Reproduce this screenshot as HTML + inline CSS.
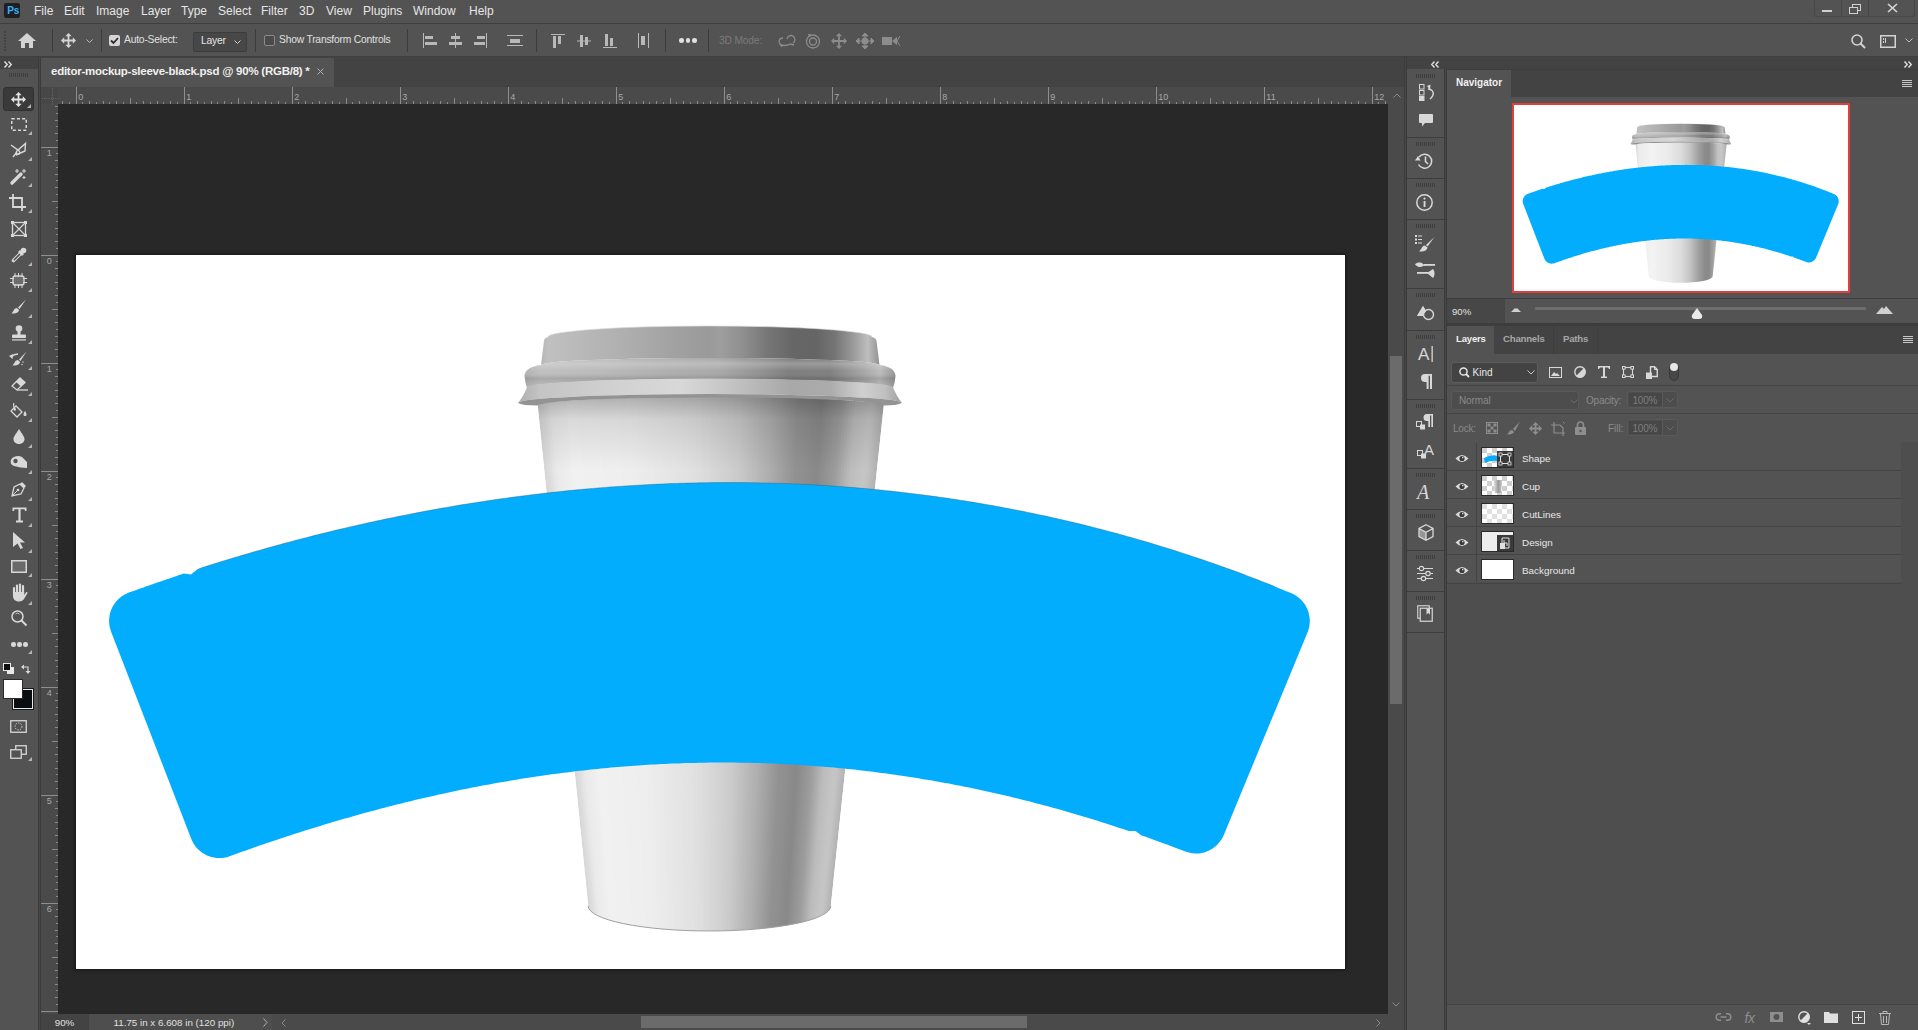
<!DOCTYPE html><html><head><meta charset="utf-8"><style>
*{margin:0;padding:0;box-sizing:border-box}
html,body{width:1918px;height:1030px;overflow:hidden;background:#535353;font-family:"Liberation Sans",sans-serif;color:#e8e8e8}
.a{position:absolute}
.t{position:absolute;white-space:nowrap;line-height:1}
svg{position:absolute;overflow:visible}
</style></head><body>
<div class="a" style="left:0px;top:0px;width:1918px;height:23px;background:#535353;"></div>
<div class="a" style="left:0px;top:23px;width:1918px;height:1px;background:#3f3f3f;"></div>
<div class="a" style="left:4px;top:3px;width:16px;height:15px;background:#1f1f1f;border-radius:2px"></div>
<div class="t" style="left:7.3px;top:5.6px;font-size:10px;color:#31b4ff;font-weight:bold;letter-spacing:-0.3px">Ps</div>
<div class="t" style="left:34px;top:5px;font-size:12px;color:#e6e6e6;font-weight:normal;">File</div>
<div class="t" style="left:64px;top:5px;font-size:12px;color:#e6e6e6;font-weight:normal;">Edit</div>
<div class="t" style="left:96px;top:5px;font-size:12px;color:#e6e6e6;font-weight:normal;">Image</div>
<div class="t" style="left:141px;top:5px;font-size:12px;color:#e6e6e6;font-weight:normal;">Layer</div>
<div class="t" style="left:181px;top:5px;font-size:12px;color:#e6e6e6;font-weight:normal;">Type</div>
<div class="t" style="left:218px;top:5px;font-size:12px;color:#e6e6e6;font-weight:normal;">Select</div>
<div class="t" style="left:261px;top:5px;font-size:12px;color:#e6e6e6;font-weight:normal;">Filter</div>
<div class="t" style="left:299px;top:5px;font-size:12px;color:#e6e6e6;font-weight:normal;">3D</div>
<div class="t" style="left:326px;top:5px;font-size:12px;color:#e6e6e6;font-weight:normal;">View</div>
<div class="t" style="left:363px;top:5px;font-size:12px;color:#e6e6e6;font-weight:normal;">Plugins</div>
<div class="t" style="left:413px;top:5px;font-size:12px;color:#e6e6e6;font-weight:normal;">Window</div>
<div class="t" style="left:469px;top:5px;font-size:12px;color:#e6e6e6;font-weight:normal;">Help</div>
<div class="a" style="left:1814px;top:-1px;width:101px;height:18px;border:1px solid #474747;border-top:none;border-radius:0 0 3px 3px"></div>
<div class="a" style="left:1841px;top:0px;width:1px;height:17px;background:#474747;"></div>
<div class="a" style="left:1868px;top:0px;width:1px;height:17px;background:#474747;"></div>
<div class="a" style="left:1822px;top:10px;width:10px;height:2px;background:#d0d0d0;"></div>
<svg style="left:1849px;top:4px" width="13" height="11" viewBox="0 0 13 11" ><rect x="3.5" y="0.5" width="8" height="6" fill="none" stroke="#d0d0d0"/><rect x="0.5" y="3.5" width="8" height="6" fill="#535353" stroke="#d0d0d0"/></svg>
<svg style="left:1887px;top:3px" width="11" height="10" viewBox="0 0 11 10" ><path d="M1,1 L10,9 M10,1 L1,9" stroke="#d8d8d8" stroke-width="1.6"/></svg>
<div class="a" style="left:0px;top:24px;width:1918px;height:33px;background:#535353;"></div>
<div class="a" style="left:0px;top:56px;width:1918px;height:1px;background:#3f3f3f;"></div>
<div class="a" style="left:4px;top:31px;width:2px;height:2px;background:#444;"></div>
<div class="a" style="left:4px;top:34px;width:2px;height:2px;background:#444;"></div>
<div class="a" style="left:4px;top:37px;width:2px;height:2px;background:#444;"></div>
<div class="a" style="left:4px;top:40px;width:2px;height:2px;background:#444;"></div>
<div class="a" style="left:4px;top:43px;width:2px;height:2px;background:#444;"></div>
<div class="a" style="left:4px;top:46px;width:2px;height:2px;background:#444;"></div>
<div class="a" style="left:4px;top:49px;width:2px;height:2px;background:#444;"></div>
<svg style="left:18px;top:33px" width="18" height="15" viewBox="0 0 18 15" ><path d="M9,0 L18,8 L15,8 L15,15 L11,15 L11,10 L7,10 L7,15 L3,15 L3,8 L0,8 Z" fill="#d4d4d4"/></svg>
<div class="a" style="left:52px;top:29px;width:1px;height:23px;background:#3c3c3c;"></div>
<div class="a" style="left:101px;top:29px;width:1px;height:23px;background:#3c3c3c;"></div>
<div class="a" style="left:255px;top:29px;width:1px;height:23px;background:#3c3c3c;"></div>
<div class="a" style="left:407px;top:29px;width:1px;height:23px;background:#3c3c3c;"></div>
<div class="a" style="left:536px;top:29px;width:1px;height:23px;background:#3c3c3c;"></div>
<div class="a" style="left:665px;top:29px;width:1px;height:23px;background:#3c3c3c;"></div>
<div class="a" style="left:708px;top:29px;width:1px;height:23px;background:#3c3c3c;"></div>
<svg style="left:61.0px;top:33.0px" width="15" height="15" viewBox="0 0 15 15" ><path d="M7.5,2 L7.5,13 M2,7.5 L13,7.5" stroke="#d4d4d4" stroke-width="1.8"/><path d="M7.5,0 L10.7,3.2 L4.3,3.2 Z M7.5,15 L10.7,11.8 L4.3,11.8 Z M0,7.5 L3.2,4.3 L3.2,10.7 Z M15,7.5 L11.8,4.3 L11.8,10.7 Z" fill="#d4d4d4"/></svg>
<svg style="left:86px;top:39px" width="7" height="4" viewBox="0 0 7 4" ><path d="M0.5,0.5 L3.5,3.5 L6.5,0.5" fill="none" stroke="#bdbdbd"/></svg>
<div class="a" style="left:109px;top:35px;width:11px;height:11px;background:#d6d6d6;border-radius:2px"></div>
<svg style="left:110px;top:37px" width="9" height="7" viewBox="0 0 9 7" ><path d="M1,3.5 L3.5,6 L8,1" fill="none" stroke="#2b2b2b" stroke-width="1.8"/></svg>
<div class="t" style="left:124px;top:35.4px;font-size:10.3px;color:#e0e0e0;font-weight:normal;letter-spacing:-0.2px">Auto-Select:</div>
<div class="a" style="left:193px;top:32px;width:54px;height:20px;background:#474747;border:1px solid #3c3c3c;border-radius:2px"></div>
<div class="t" style="left:201px;top:36.2px;font-size:10.3px;color:#e6e6e6;font-weight:normal;letter-spacing:-0.2px">Layer</div>
<svg style="left:234px;top:40px" width="7" height="4" viewBox="0 0 7 4" ><path d="M0.5,0.5 L3.5,3.5 L6.5,0.5" fill="none" stroke="#cfcfcf"/></svg>
<div class="a" style="left:264px;top:35px;width:11px;height:11px;border:1px solid #8a8a8a;border-radius:2px;background:#4a4a4a"></div>
<div class="t" style="left:279px;top:35.4px;font-size:10.3px;color:#e0e0e0;font-weight:normal;letter-spacing:-0.2px">Show Transform Controls</div>
<svg style="left:423px;top:33px" width="14" height="15" viewBox="0 0 14 15" ><rect x="0" y="0" width="1" height="15" fill="#b8b8b8"/><rect x="2" y="3" width="8" height="3" fill="#b8b8b8"/><rect x="2" y="9" width="12" height="3" fill="#b8b8b8"/></svg>
<svg style="left:449px;top:33px" width="13" height="15" viewBox="0 0 13 15" ><rect x="6" y="0" width="1" height="15" fill="#b8b8b8"/><rect x="2" y="3" width="9" height="3" fill="#b8b8b8"/><rect x="0" y="9" width="13" height="3" fill="#b8b8b8"/></svg>
<svg style="left:474px;top:33px" width="13" height="15" viewBox="0 0 13 15" ><rect x="12" y="0" width="1" height="15" fill="#b8b8b8"/><rect x="3" y="3" width="8" height="3" fill="#b8b8b8"/><rect x="0" y="9" width="11" height="3" fill="#b8b8b8"/></svg>
<svg style="left:507px;top:35px" width="16" height="11" viewBox="0 0 16 11" ><rect x="0" y="0" width="16" height="1" fill="#b8b8b8"/><rect x="3" y="4" width="10" height="4" fill="#b8b8b8"/><rect x="0" y="10" width="16" height="1" fill="#b8b8b8"/></svg>
<svg style="left:551px;top:34px" width="14" height="14" viewBox="0 0 14 14" ><rect x="0" y="0" width="14" height="1" fill="#b8b8b8"/><rect x="2" y="2" width="3" height="12" fill="#b8b8b8"/><rect x="7" y="2" width="3" height="8" fill="#b8b8b8"/></svg>
<svg style="left:577px;top:34px" width="14" height="14" viewBox="0 0 14 14" ><rect x="0" y="6.5" width="14" height="1" fill="#b8b8b8"/><rect x="3" y="1" width="3" height="12" fill="#b8b8b8"/><rect x="8" y="3" width="3" height="8" fill="#b8b8b8"/></svg>
<svg style="left:603px;top:34px" width="14" height="14" viewBox="0 0 14 14" ><rect x="0" y="13" width="14" height="1" fill="#b8b8b8"/><rect x="2" y="0" width="3" height="12" fill="#b8b8b8"/><rect x="7" y="4" width="3" height="8" fill="#b8b8b8"/></svg>
<svg style="left:638px;top:33px" width="11" height="15" viewBox="0 0 11 15" ><rect x="0" y="0" width="1" height="15" fill="#b8b8b8"/><rect x="3" y="3" width="4" height="9" fill="#b8b8b8"/><rect x="10" y="0" width="1" height="15" fill="#b8b8b8"/></svg>
<div class="a" style="left:679.0px;top:38px;width:4.5px;height:4.5px;border-radius:50%;background:#e0e0e0"></div>
<div class="a" style="left:685.5px;top:38px;width:4.5px;height:4.5px;border-radius:50%;background:#e0e0e0"></div>
<div class="a" style="left:692.0px;top:38px;width:4.5px;height:4.5px;border-radius:50%;background:#e0e0e0"></div>
<div class="t" style="left:719px;top:35.6px;font-size:10.3px;color:#7a7a7a;font-weight:normal;letter-spacing:-0.2px">3D Mode:</div>
<svg style="left:778px;top:33px" width="19" height="15" viewBox="0 0 19 15" ><path d="M5,5 C1,5 0,9 2,11 C4,13 9,13 12,11 M9,6 a4,4 0 1 1 6,4 M2,11 L4,14 M12,11 L16,12" fill="none" stroke="#8c8c8c" stroke-width="1.3"/></svg>
<svg style="left:805px;top:33px" width="16" height="16" viewBox="0 0 16 16" ><circle cx="8" cy="8.5" r="6.5" fill="none" stroke="#8c8c8c" stroke-width="1.3"/><circle cx="8" cy="8.5" r="3.5" fill="none" stroke="#8c8c8c" stroke-width="1.3"/><path d="M3,1 L6,1 L4,4 Z" fill="#8c8c8c"/></svg>
<svg style="left:830.5px;top:32.5px" width="16" height="16" viewBox="0 0 16 16" ><path d="M8.0,2 L8.0,14 M2,8.0 L14,8.0" stroke="#8c8c8c" stroke-width="1.8"/><path d="M8.0,0 L11.2,3.2 L4.8,3.2 Z M8.0,16 L11.2,12.8 L4.8,12.8 Z M0,8.0 L3.2,4.8 L3.2,11.2 Z M16,8.0 L12.8,4.8 L12.8,11.2 Z" fill="#8c8c8c"/></svg>
<svg style="left:856px;top:33px" width="18" height="16" viewBox="0 0 18 16" ><circle cx="9" cy="8" r="3.5" fill="#8c8c8c"/><path d="M9,0 L12,3 L6,3 Z M9,16 L12,13 L6,13 Z M0,8 L3,5 L3,11 Z M18,8 L15,5 L15,11 Z M9,3 L9,13 M3,8 L15,8" fill="#8c8c8c" stroke="#8c8c8c"/></svg>
<svg style="left:882px;top:35px" width="18" height="11" viewBox="0 0 18 11" ><rect x="0" y="2" width="10" height="8" fill="#8c8c8c"/><path d="M10,6 L15,2 L15,10 Z" fill="#8c8c8c"/><path d="M18,1 L15,6 L18,11" fill="none" stroke="#8c8c8c"/></svg>
<svg style="left:1851px;top:34px" width="15" height="15" viewBox="0 0 15 15" ><circle cx="6" cy="6" r="5" fill="none" stroke="#d4d4d4" stroke-width="1.6"/><path d="M9.5,9.5 L14,14" stroke="#d4d4d4" stroke-width="2"/></svg>
<svg style="left:1880px;top:35px" width="16" height="13" viewBox="0 0 16 13" ><rect x="0.75" y="0.75" width="14.5" height="11.5" fill="none" stroke="#d4d4d4" stroke-width="1.5"/><rect x="3" y="3" width="1" height="2" fill="#d4d4d4"/><rect x="3" y="6" width="1" height="2" fill="#d4d4d4"/><rect x="5" y="3" width="1" height="5" fill="#d4d4d4"/></svg>
<svg style="left:1905px;top:38px" width="8" height="5" viewBox="0 0 8 5" ><path d="M0.5,0.5 L4,4 L7.5,0.5" fill="none" stroke="#bdbdbd"/></svg>
<div class="a" style="left:0px;top:57px;width:1918px;height:30px;background:#434343;"></div>
<div class="a" style="left:41px;top:58px;width:293px;height:29px;background:#535353;"></div>
<div class="t" style="left:51px;top:65.9px;font-size:11.5px;color:#f0f0f0;font-weight:bold;letter-spacing:-0.25px">editor-mockup-sleeve-black.psd @ 90% (RGB/8) *</div>
<svg style="left:317px;top:68px" width="7" height="7" viewBox="0 0 7 7" ><path d="M0.5,0.5 L6.5,6.5 M6.5,0.5 L0.5,6.5" stroke="#b0b0b0"/></svg>
<div class="a" style="left:0px;top:57px;width:38px;height:12px;background:#434343;"></div>
<svg style="left:4px;top:61px" width="8" height="7" viewBox="0 0 8 7" ><path d="M0.5,0.5 L3.25,3.5 L0.5,6.5 M4.5,0.5 L7.25,3.5 L4.5,6.5" fill="none" stroke="#e0e0e0" stroke-width="1.4"/></svg>
<div class="a" style="left:0px;top:69px;width:38px;height:961px;background:#535353;"></div>
<div class="a" style="left:38px;top:57px;width:3px;height:973px;background:#3b3b3b;"></div>
<div class="a" style="left:39px;top:57px;width:1px;height:973px;background:#474747;"></div>
<div class="a" style="left:9px;top:73px;width:1px;height:4px;background:#3e3e3e;"></div>
<div class="a" style="left:11px;top:73px;width:1px;height:4px;background:#3e3e3e;"></div>
<div class="a" style="left:13px;top:73px;width:1px;height:4px;background:#3e3e3e;"></div>
<div class="a" style="left:15px;top:73px;width:1px;height:4px;background:#3e3e3e;"></div>
<div class="a" style="left:17px;top:73px;width:1px;height:4px;background:#3e3e3e;"></div>
<div class="a" style="left:19px;top:73px;width:1px;height:4px;background:#3e3e3e;"></div>
<div class="a" style="left:21px;top:73px;width:1px;height:4px;background:#3e3e3e;"></div>
<div class="a" style="left:23px;top:73px;width:1px;height:4px;background:#3e3e3e;"></div>
<div class="a" style="left:25px;top:73px;width:1px;height:4px;background:#3e3e3e;"></div>
<div class="a" style="left:27px;top:73px;width:1px;height:4px;background:#3e3e3e;"></div>
<div class="a" style="left:3px;top:87px;width:31px;height:24px;background:#3a3a3a;border:1px solid #303030;border-radius:3px"></div>
<svg style="left:11.0px;top:92.0px" width="15" height="15" viewBox="0 0 15 15" ><path d="M7.5,2 L7.5,13 M2,7.5 L13,7.5" stroke="#e2e2e2" stroke-width="1.8"/><path d="M7.5,0 L10.7,3.2 L4.3,3.2 Z M7.5,15 L10.7,11.8 L4.3,11.8 Z M0,7.5 L3.2,4.3 L3.2,10.7 Z M15,7.5 L11.8,4.3 L11.8,10.7 Z" fill="#e2e2e2"/></svg>
<svg style="left:27px;top:104px" width="4" height="4" viewBox="0 0 4 4" ><path d="M4,0 L4,4 L0,4 Z" fill="#b4b4b4"/></svg>
<svg style="left:11px;top:118px" width="16" height="13" viewBox="0 0 16 13" ><rect x="0.75" y="0.75" width="14.5" height="11.5" fill="none" stroke="#d8d8d8" stroke-width="1.5" stroke-dasharray="3,2.2"/></svg>
<svg style="left:28px;top:131px" width="4" height="4" viewBox="0 0 4 4" ><path d="M4,0 L4,4 L0,4 Z" fill="#b4b4b4"/></svg>
<svg style="left:10px;top:142px" width="17" height="16" viewBox="0 0 17 16" ><path d="M1,3 L8,8 L15.5,1.5 L15,9 L6,13 M7,10 L3,15" fill="none" stroke="#d8d8d8" stroke-width="1.4"/><circle cx="8" cy="10.5" r="1.8" fill="none" stroke="#d8d8d8" stroke-width="1.3"/></svg>
<svg style="left:28px;top:157px" width="4" height="4" viewBox="0 0 4 4" ><path d="M4,0 L4,4 L0,4 Z" fill="#b4b4b4"/></svg>
<svg style="left:10px;top:168px" width="17" height="17" viewBox="0 0 17 17" ><path d="M2,15 L11,6" stroke="#d8d8d8" stroke-width="3.4" stroke-linecap="round"/><path d="M7,1 L7,5 M5,3 L9,3 M14,1 L14,5 M12,3 L16,3 M14,8 L14,11 M12.5,9.5 L15.5,9.5" stroke="#d8d8d8" stroke-width="1.1"/></svg>
<svg style="left:28px;top:183px" width="4" height="4" viewBox="0 0 4 4" ><path d="M4,0 L4,4 L0,4 Z" fill="#b4b4b4"/></svg>
<svg style="left:9px;top:194px" width="18" height="18" viewBox="0 0 18 18" ><path d="M4,0 L4,13 L17,13 M0,4 L13,4 L13,17" fill="none" stroke="#d8d8d8" stroke-width="1.8"/></svg>
<svg style="left:28px;top:209px" width="4" height="4" viewBox="0 0 4 4" ><path d="M4,0 L4,4 L0,4 Z" fill="#b4b4b4"/></svg>
<svg style="left:11px;top:221px" width="16" height="16" viewBox="0 0 16 16" ><rect x="1.5" y="1.5" width="13" height="13" fill="none" stroke="#d8d8d8" stroke-width="1.3"/><path d="M1.5,1.5 L14.5,14.5 M14.5,1.5 L1.5,14.5" stroke="#d8d8d8" stroke-width="1.1"/><rect x="0" y="0" width="3" height="3" fill="#d8d8d8"/><rect x="13" y="0" width="3" height="3" fill="#d8d8d8"/><rect x="0" y="13" width="3" height="3" fill="#d8d8d8"/><rect x="13" y="13" width="3" height="3" fill="#d8d8d8"/></svg>
<svg style="left:11px;top:247px" width="16" height="16" viewBox="0 0 16 16" ><path d="M2.5,13.5 L9.5,6.5" stroke="#d8d8d8" stroke-width="3.6" stroke-linecap="round"/><path d="M3.3,12.7 L9,7" stroke="#535353" stroke-width="1.6" stroke-linecap="round"/><path d="M8,4 L12,8" stroke="#d8d8d8" stroke-width="3"/><circle cx="12.5" cy="3.5" r="2.8" fill="#d8d8d8"/></svg>
<svg style="left:28px;top:262px" width="4" height="4" viewBox="0 0 4 4" ><path d="M4,0 L4,4 L0,4 Z" fill="#b4b4b4"/></svg>
<svg style="left:10px;top:273px" width="17" height="15" viewBox="0 0 17 15" ><rect x="3" y="3" width="11" height="9" rx="2" fill="#6c6c6c" stroke="#d8d8d8" stroke-width="1.3"/><path d="M5,0 L5,15 M8.5,0 L8.5,15 M12,0 L12,15 M0,5.5 L17,5.5 M0,9.5 L17,9.5" stroke="#d8d8d8" stroke-width="1"/><rect x="4" y="4" width="9" height="7" fill="#6c6c6c"/></svg>
<svg style="left:28px;top:288px" width="4" height="4" viewBox="0 0 4 4" ><path d="M4,0 L4,4 L0,4 Z" fill="#b4b4b4"/></svg>
<svg style="left:11px;top:299px" width="15" height="15" viewBox="0 0 15 15" ><path d="M15,0.5 L7,8.5 L8.5,10 Z" fill="#d8d8d8"/><path d="M6,9 C3,9 3,12 0.5,14.5 C5,15 8,13 8,11 Z" fill="#d8d8d8"/></svg>
<svg style="left:28px;top:314px" width="4" height="4" viewBox="0 0 4 4" ><path d="M4,0 L4,4 L0,4 Z" fill="#b4b4b4"/></svg>
<svg style="left:11px;top:325px" width="16" height="16" viewBox="0 0 16 16" ><circle cx="8" cy="3.5" r="3.3" fill="#d8d8d8"/><rect x="6.5" y="5" width="3" height="5" fill="#d8d8d8"/><rect x="1" y="9.5" width="14" height="3.5" rx="1" fill="#d8d8d8"/><rect x="1" y="14.3" width="14" height="1.2" fill="#d8d8d8"/></svg>
<svg style="left:28px;top:340px" width="4" height="4" viewBox="0 0 4 4" ><path d="M4,0 L4,4 L0,4 Z" fill="#b4b4b4"/></svg>
<svg style="left:9px;top:351px" width="19" height="16" viewBox="0 0 19 16" ><path d="M17.5,0.5 L10,8.5 L11.5,10 Z" fill="#d8d8d8"/><path d="M9,9 C6,9 6,12 3.5,14.5 C8,15 11,13 11,11 Z" fill="#d8d8d8"/><path d="M9,3 C6,3 4,4 2,6" fill="none" stroke="#d8d8d8" stroke-width="1.3"/><path d="M0,5 L4,3 L3.5,8 Z" fill="#d8d8d8"/><circle cx="14" cy="11" r="0.7" fill="#d8d8d8"/><circle cx="13" cy="13.5" r="0.7" fill="#d8d8d8"/></svg>
<svg style="left:28px;top:366px" width="4" height="4" viewBox="0 0 4 4" ><path d="M4,0 L4,4 L0,4 Z" fill="#b4b4b4"/></svg>
<svg style="left:11px;top:377px" width="18" height="15" viewBox="0 0 18 15" ><path d="M1,9 L9,1 L14,5.5 L6,13 Z" fill="#535353" stroke="#d8d8d8" stroke-width="1.3"/><path d="M9,1 L14,5.5 L10,9.5 L5,5 Z" fill="#d8d8d8"/><path d="M6,13 L17,13" stroke="#d8d8d8" stroke-width="1.3"/></svg>
<svg style="left:28px;top:392px" width="4" height="4" viewBox="0 0 4 4" ><path d="M4,0 L4,4 L0,4 Z" fill="#b4b4b4"/></svg>
<svg style="left:10px;top:402px" width="18" height="16" viewBox="0 0 18 16" ><path d="M6,4 L12,10 L7,15 L1,9 Z" fill="none" stroke="#d8d8d8" stroke-width="1.3"/><path d="M4,1 C3,3 4,6 5,7" fill="none" stroke="#d8d8d8" stroke-width="1.2"/><circle cx="4.8" cy="7.5" r="1.2" fill="#d8d8d8"/><path d="M15,9 C17,12 17,14 15,14 C13,14 13,12 15,9 Z" fill="#d8d8d8"/></svg>
<svg style="left:28px;top:418px" width="4" height="4" viewBox="0 0 4 4" ><path d="M4,0 L4,4 L0,4 Z" fill="#b4b4b4"/></svg>
<svg style="left:13px;top:429px" width="12" height="15" viewBox="0 0 12 15" ><path d="M6,0 C9,5 12,8 11.5,10.5 C11,14 8,15 6,15 C4,15 1,14 0.5,10.5 C0,8 3,5 6,0 Z" fill="#d8d8d8"/></svg>
<svg style="left:28px;top:444px" width="4" height="4" viewBox="0 0 4 4" ><path d="M4,0 L4,4 L0,4 Z" fill="#b4b4b4"/></svg>
<svg style="left:10px;top:455px" width="18" height="14" viewBox="0 0 18 14" ><path d="M4,2 C8,0 12,1 14,4 L17,7 L17,13 C13,13 8,12 4,11 C1,10 0,8 1,5 C1.5,3.5 2.5,2.5 4,2 Z" fill="#d8d8d8"/><circle cx="5.5" cy="6" r="2.2" fill="#535353"/></svg>
<svg style="left:28px;top:470px" width="4" height="4" viewBox="0 0 4 4" ><path d="M4,0 L4,4 L0,4 Z" fill="#b4b4b4"/></svg>
<svg style="left:11px;top:481px" width="16" height="16" viewBox="0 0 16 16" ><path d="M11,1 L15,5 L13,7 L9,3 Z" fill="#d8d8d8"/><path d="M9,3 L13,7 L10,13 L1,15 L3,6 Z" fill="none" stroke="#d8d8d8" stroke-width="1.3"/><path d="M1,15 L6.5,9.5" stroke="#d8d8d8"/><circle cx="7" cy="9" r="1.3" fill="#d8d8d8"/></svg>
<svg style="left:28px;top:497px" width="4" height="4" viewBox="0 0 4 4" ><path d="M4,0 L4,4 L0,4 Z" fill="#b4b4b4"/></svg>
<svg style="left:12px;top:507px" width="15" height="16" viewBox="0 0 15 16" ><path d="M0.5,0.5 L14.5,0.5 L14.5,4 L13,4 L12.5,2.3 L8.6,2.3 L8.6,13.5 L11,13.5 L11,15.5 L4,15.5 L4,13.5 L6.4,13.5 L6.4,2.3 L2.5,2.3 L2,4 L0.5,4 Z" fill="#d8d8d8"/></svg>
<svg style="left:28px;top:523px" width="4" height="4" viewBox="0 0 4 4" ><path d="M4,0 L4,4 L0,4 Z" fill="#b4b4b4"/></svg>
<svg style="left:13px;top:532px" width="13" height="17" viewBox="0 0 13 17" ><path d="M0,0 L12,10.5 L7,10.5 L10,16 L7.5,17 L4.5,11.5 L0,15 Z" fill="#d8d8d8"/></svg>
<svg style="left:28px;top:549px" width="4" height="4" viewBox="0 0 4 4" ><path d="M4,0 L4,4 L0,4 Z" fill="#b4b4b4"/></svg>
<svg style="left:11px;top:560px" width="16" height="13" viewBox="0 0 16 13" ><rect x="0.75" y="0.75" width="14.5" height="11.5" fill="#6a6a6a" stroke="#d8d8d8" stroke-width="1.5"/></svg>
<svg style="left:28px;top:573px" width="4" height="4" viewBox="0 0 4 4" ><path d="M4,0 L4,4 L0,4 Z" fill="#b4b4b4"/></svg>
<svg style="left:10px;top:583px" width="18" height="19" viewBox="0 0 18 19" ><path d="M4,12 L4,5" stroke="#d8d8d8" stroke-width="2.2" stroke-linecap="round"/><path d="M7,10 L7,2.5" stroke="#d8d8d8" stroke-width="2.2" stroke-linecap="round"/><path d="M10,10 L10,1.5" stroke="#d8d8d8" stroke-width="2.2" stroke-linecap="round"/><path d="M13,10 L13,3" stroke="#d8d8d8" stroke-width="2.2" stroke-linecap="round"/><path d="M3,9 L14.2,9 L14.2,12 L16,9.5 C17,8.5 18,9.5 17.3,10.5 L14,16 C13,17.5 11.5,18.5 9,18.5 C5,18.5 3,16 3,13 Z" fill="#d8d8d8"/></svg>
<svg style="left:28px;top:601px" width="4" height="4" viewBox="0 0 4 4" ><path d="M4,0 L4,4 L0,4 Z" fill="#b4b4b4"/></svg>
<svg style="left:11px;top:610px" width="16" height="17" viewBox="0 0 16 17" ><circle cx="6.5" cy="6.5" r="5.5" fill="none" stroke="#d8d8d8" stroke-width="1.5"/><path d="M10.5,10.5 L15.5,15.5" stroke="#d8d8d8" stroke-width="2"/><path d="M4.5,4 A3,3 0 0 1 8.5,4" fill="none" stroke="#d8d8d8" stroke-width="0.8"/></svg>
<div class="a" style="left:11px;top:642px;width:4.5px;height:4.5px;border-radius:50%;background:#d8d8d8"></div>
<div class="a" style="left:17px;top:642px;width:4.5px;height:4.5px;border-radius:50%;background:#d8d8d8"></div>
<div class="a" style="left:23px;top:642px;width:4.5px;height:4.5px;border-radius:50%;background:#d8d8d8"></div>
<svg style="left:28px;top:650px" width="4" height="4" viewBox="0 0 4 4" ><path d="M4,0 L4,4 L0,4 Z" fill="#b4b4b4"/></svg>
<div class="a" style="left:7px;top:667px;width:7px;height:7px;background:#e8e8e8;"></div>
<div class="a" style="left:4px;top:664px;width:6px;height:6px;background:#0d0d0d;outline:1px solid #e8e8e8"></div>
<svg style="left:21px;top:663px" width="11" height="11" viewBox="0 0 11 11" ><path d="M1,4 L7,4 L7,10" fill="none" stroke="#d8d8d8" stroke-width="1.2"/><path d="M0,4 L3,1.5 L3,6.5 Z M7,11 L4.5,8 L9.5,8 Z" fill="#d8d8d8"/></svg>
<div class="a" style="left:13px;top:689px;width:20px;height:20px;background:#0a0e10;border:1px solid #e8e8e8;outline:1px solid #1a1a1a"></div>
<div class="a" style="left:3px;top:679px;width:20px;height:20px;background:#ffffff;border:1px solid #2a2a2a"></div>
<svg style="left:10px;top:720px" width="17" height="13" viewBox="0 0 17 13" ><rect x="0.75" y="0.75" width="15.5" height="11.5" fill="none" stroke="#d8d8d8" stroke-width="1.3"/><circle cx="8.5" cy="6.5" r="3.5" fill="none" stroke="#d8d8d8" stroke-width="1" stroke-dasharray="1.3,1.3"/></svg>
<svg style="left:10px;top:745px" width="17" height="14" viewBox="0 0 17 14" ><rect x="5.75" y="0.75" width="10.5" height="8.5" fill="#535353" stroke="#d8d8d8" stroke-width="1.3"/><rect x="0.75" y="4.75" width="10.5" height="8.5" fill="#535353" stroke="#d8d8d8" stroke-width="1.3"/></svg>
<svg style="left:28px;top:757px" width="4" height="4" viewBox="0 0 4 4" ><path d="M4,0 L4,4 L0,4 Z" fill="#b4b4b4"/></svg>
<div class="a" style="left:41px;top:87px;width:1347px;height:17px;background:#4a4a4a;"></div>
<div class="a" style="left:41px;top:104px;width:17px;height:910px;background:#4a4a4a;"></div>
<div class="a" style="left:41px;top:87px;width:17px;height:17px;background:#474747;"></div>
<svg style="left:58px;top:87px" width="1330" height="17" viewBox="0 0 1330 17" ><rect x="4" y="14" width="1" height="3" fill="#8a8a8a"/><rect x="11" y="15" width="1" height="2" fill="#8a8a8a"/><rect x="18" y="0" width="1" height="17" fill="#8e8e8e"/><rect x="24" y="15" width="1" height="2" fill="#8a8a8a"/><rect x="31" y="14" width="1" height="3" fill="#8a8a8a"/><rect x="38" y="15" width="1" height="2" fill="#8a8a8a"/><rect x="45" y="14" width="1" height="3" fill="#8a8a8a"/><rect x="51" y="15" width="1" height="2" fill="#8a8a8a"/><rect x="58" y="14" width="1" height="3" fill="#8a8a8a"/><rect x="65" y="15" width="1" height="2" fill="#8a8a8a"/><rect x="72" y="11" width="1" height="6" fill="#8a8a8a"/><rect x="78" y="15" width="1" height="2" fill="#8a8a8a"/><rect x="85" y="14" width="1" height="3" fill="#8a8a8a"/><rect x="92" y="15" width="1" height="2" fill="#8a8a8a"/><rect x="99" y="14" width="1" height="3" fill="#8a8a8a"/><rect x="105" y="15" width="1" height="2" fill="#8a8a8a"/><rect x="112" y="14" width="1" height="3" fill="#8a8a8a"/><rect x="119" y="15" width="1" height="2" fill="#8a8a8a"/><text x="20.3" y="12.8" font-size="9" fill="#a8a8a8" font-family="Liberation Sans">0</text><rect x="126" y="0" width="1" height="17" fill="#8e8e8e"/><rect x="132" y="15" width="1" height="2" fill="#8a8a8a"/><rect x="139" y="14" width="1" height="3" fill="#8a8a8a"/><rect x="146" y="15" width="1" height="2" fill="#8a8a8a"/><rect x="153" y="14" width="1" height="3" fill="#8a8a8a"/><rect x="159" y="15" width="1" height="2" fill="#8a8a8a"/><rect x="166" y="14" width="1" height="3" fill="#8a8a8a"/><rect x="173" y="15" width="1" height="2" fill="#8a8a8a"/><rect x="180" y="11" width="1" height="6" fill="#8a8a8a"/><rect x="186" y="15" width="1" height="2" fill="#8a8a8a"/><rect x="193" y="14" width="1" height="3" fill="#8a8a8a"/><rect x="200" y="15" width="1" height="2" fill="#8a8a8a"/><rect x="207" y="14" width="1" height="3" fill="#8a8a8a"/><rect x="213" y="15" width="1" height="2" fill="#8a8a8a"/><rect x="220" y="14" width="1" height="3" fill="#8a8a8a"/><rect x="227" y="15" width="1" height="2" fill="#8a8a8a"/><text x="128.3" y="12.8" font-size="9" fill="#a8a8a8" font-family="Liberation Sans">1</text><rect x="234" y="0" width="1" height="17" fill="#8e8e8e"/><rect x="240" y="15" width="1" height="2" fill="#8a8a8a"/><rect x="247" y="14" width="1" height="3" fill="#8a8a8a"/><rect x="254" y="15" width="1" height="2" fill="#8a8a8a"/><rect x="261" y="14" width="1" height="3" fill="#8a8a8a"/><rect x="267" y="15" width="1" height="2" fill="#8a8a8a"/><rect x="274" y="14" width="1" height="3" fill="#8a8a8a"/><rect x="281" y="15" width="1" height="2" fill="#8a8a8a"/><rect x="288" y="11" width="1" height="6" fill="#8a8a8a"/><rect x="294" y="15" width="1" height="2" fill="#8a8a8a"/><rect x="301" y="14" width="1" height="3" fill="#8a8a8a"/><rect x="308" y="15" width="1" height="2" fill="#8a8a8a"/><rect x="315" y="14" width="1" height="3" fill="#8a8a8a"/><rect x="321" y="15" width="1" height="2" fill="#8a8a8a"/><rect x="328" y="14" width="1" height="3" fill="#8a8a8a"/><rect x="335" y="15" width="1" height="2" fill="#8a8a8a"/><text x="236.3" y="12.8" font-size="9" fill="#a8a8a8" font-family="Liberation Sans">2</text><rect x="342" y="0" width="1" height="17" fill="#8e8e8e"/><rect x="348" y="15" width="1" height="2" fill="#8a8a8a"/><rect x="355" y="14" width="1" height="3" fill="#8a8a8a"/><rect x="362" y="15" width="1" height="2" fill="#8a8a8a"/><rect x="369" y="14" width="1" height="3" fill="#8a8a8a"/><rect x="375" y="15" width="1" height="2" fill="#8a8a8a"/><rect x="382" y="14" width="1" height="3" fill="#8a8a8a"/><rect x="389" y="15" width="1" height="2" fill="#8a8a8a"/><rect x="396" y="11" width="1" height="6" fill="#8a8a8a"/><rect x="402" y="15" width="1" height="2" fill="#8a8a8a"/><rect x="409" y="14" width="1" height="3" fill="#8a8a8a"/><rect x="416" y="15" width="1" height="2" fill="#8a8a8a"/><rect x="423" y="14" width="1" height="3" fill="#8a8a8a"/><rect x="429" y="15" width="1" height="2" fill="#8a8a8a"/><rect x="436" y="14" width="1" height="3" fill="#8a8a8a"/><rect x="443" y="15" width="1" height="2" fill="#8a8a8a"/><text x="344.3" y="12.8" font-size="9" fill="#a8a8a8" font-family="Liberation Sans">3</text><rect x="450" y="0" width="1" height="17" fill="#8e8e8e"/><rect x="456" y="15" width="1" height="2" fill="#8a8a8a"/><rect x="463" y="14" width="1" height="3" fill="#8a8a8a"/><rect x="470" y="15" width="1" height="2" fill="#8a8a8a"/><rect x="477" y="14" width="1" height="3" fill="#8a8a8a"/><rect x="483" y="15" width="1" height="2" fill="#8a8a8a"/><rect x="490" y="14" width="1" height="3" fill="#8a8a8a"/><rect x="497" y="15" width="1" height="2" fill="#8a8a8a"/><rect x="504" y="11" width="1" height="6" fill="#8a8a8a"/><rect x="510" y="15" width="1" height="2" fill="#8a8a8a"/><rect x="517" y="14" width="1" height="3" fill="#8a8a8a"/><rect x="524" y="15" width="1" height="2" fill="#8a8a8a"/><rect x="531" y="14" width="1" height="3" fill="#8a8a8a"/><rect x="537" y="15" width="1" height="2" fill="#8a8a8a"/><rect x="544" y="14" width="1" height="3" fill="#8a8a8a"/><rect x="551" y="15" width="1" height="2" fill="#8a8a8a"/><text x="452.3" y="12.8" font-size="9" fill="#a8a8a8" font-family="Liberation Sans">4</text><rect x="558" y="0" width="1" height="17" fill="#8e8e8e"/><rect x="564" y="15" width="1" height="2" fill="#8a8a8a"/><rect x="571" y="14" width="1" height="3" fill="#8a8a8a"/><rect x="578" y="15" width="1" height="2" fill="#8a8a8a"/><rect x="585" y="14" width="1" height="3" fill="#8a8a8a"/><rect x="591" y="15" width="1" height="2" fill="#8a8a8a"/><rect x="598" y="14" width="1" height="3" fill="#8a8a8a"/><rect x="605" y="15" width="1" height="2" fill="#8a8a8a"/><rect x="612" y="11" width="1" height="6" fill="#8a8a8a"/><rect x="618" y="15" width="1" height="2" fill="#8a8a8a"/><rect x="625" y="14" width="1" height="3" fill="#8a8a8a"/><rect x="632" y="15" width="1" height="2" fill="#8a8a8a"/><rect x="639" y="14" width="1" height="3" fill="#8a8a8a"/><rect x="645" y="15" width="1" height="2" fill="#8a8a8a"/><rect x="652" y="14" width="1" height="3" fill="#8a8a8a"/><rect x="659" y="15" width="1" height="2" fill="#8a8a8a"/><text x="560.3" y="12.8" font-size="9" fill="#a8a8a8" font-family="Liberation Sans">5</text><rect x="666" y="0" width="1" height="17" fill="#8e8e8e"/><rect x="672" y="15" width="1" height="2" fill="#8a8a8a"/><rect x="679" y="14" width="1" height="3" fill="#8a8a8a"/><rect x="686" y="15" width="1" height="2" fill="#8a8a8a"/><rect x="693" y="14" width="1" height="3" fill="#8a8a8a"/><rect x="699" y="15" width="1" height="2" fill="#8a8a8a"/><rect x="706" y="14" width="1" height="3" fill="#8a8a8a"/><rect x="713" y="15" width="1" height="2" fill="#8a8a8a"/><rect x="720" y="11" width="1" height="6" fill="#8a8a8a"/><rect x="726" y="15" width="1" height="2" fill="#8a8a8a"/><rect x="733" y="14" width="1" height="3" fill="#8a8a8a"/><rect x="740" y="15" width="1" height="2" fill="#8a8a8a"/><rect x="747" y="14" width="1" height="3" fill="#8a8a8a"/><rect x="753" y="15" width="1" height="2" fill="#8a8a8a"/><rect x="760" y="14" width="1" height="3" fill="#8a8a8a"/><rect x="767" y="15" width="1" height="2" fill="#8a8a8a"/><text x="668.3" y="12.8" font-size="9" fill="#a8a8a8" font-family="Liberation Sans">6</text><rect x="774" y="0" width="1" height="17" fill="#8e8e8e"/><rect x="780" y="15" width="1" height="2" fill="#8a8a8a"/><rect x="787" y="14" width="1" height="3" fill="#8a8a8a"/><rect x="794" y="15" width="1" height="2" fill="#8a8a8a"/><rect x="801" y="14" width="1" height="3" fill="#8a8a8a"/><rect x="807" y="15" width="1" height="2" fill="#8a8a8a"/><rect x="814" y="14" width="1" height="3" fill="#8a8a8a"/><rect x="821" y="15" width="1" height="2" fill="#8a8a8a"/><rect x="828" y="11" width="1" height="6" fill="#8a8a8a"/><rect x="834" y="15" width="1" height="2" fill="#8a8a8a"/><rect x="841" y="14" width="1" height="3" fill="#8a8a8a"/><rect x="848" y="15" width="1" height="2" fill="#8a8a8a"/><rect x="855" y="14" width="1" height="3" fill="#8a8a8a"/><rect x="861" y="15" width="1" height="2" fill="#8a8a8a"/><rect x="868" y="14" width="1" height="3" fill="#8a8a8a"/><rect x="875" y="15" width="1" height="2" fill="#8a8a8a"/><text x="776.3" y="12.8" font-size="9" fill="#a8a8a8" font-family="Liberation Sans">7</text><rect x="882" y="0" width="1" height="17" fill="#8e8e8e"/><rect x="888" y="15" width="1" height="2" fill="#8a8a8a"/><rect x="895" y="14" width="1" height="3" fill="#8a8a8a"/><rect x="902" y="15" width="1" height="2" fill="#8a8a8a"/><rect x="909" y="14" width="1" height="3" fill="#8a8a8a"/><rect x="915" y="15" width="1" height="2" fill="#8a8a8a"/><rect x="922" y="14" width="1" height="3" fill="#8a8a8a"/><rect x="929" y="15" width="1" height="2" fill="#8a8a8a"/><rect x="936" y="11" width="1" height="6" fill="#8a8a8a"/><rect x="942" y="15" width="1" height="2" fill="#8a8a8a"/><rect x="949" y="14" width="1" height="3" fill="#8a8a8a"/><rect x="956" y="15" width="1" height="2" fill="#8a8a8a"/><rect x="963" y="14" width="1" height="3" fill="#8a8a8a"/><rect x="969" y="15" width="1" height="2" fill="#8a8a8a"/><rect x="976" y="14" width="1" height="3" fill="#8a8a8a"/><rect x="983" y="15" width="1" height="2" fill="#8a8a8a"/><text x="884.3" y="12.8" font-size="9" fill="#a8a8a8" font-family="Liberation Sans">8</text><rect x="990" y="0" width="1" height="17" fill="#8e8e8e"/><rect x="996" y="15" width="1" height="2" fill="#8a8a8a"/><rect x="1003" y="14" width="1" height="3" fill="#8a8a8a"/><rect x="1010" y="15" width="1" height="2" fill="#8a8a8a"/><rect x="1017" y="14" width="1" height="3" fill="#8a8a8a"/><rect x="1023" y="15" width="1" height="2" fill="#8a8a8a"/><rect x="1030" y="14" width="1" height="3" fill="#8a8a8a"/><rect x="1037" y="15" width="1" height="2" fill="#8a8a8a"/><rect x="1044" y="11" width="1" height="6" fill="#8a8a8a"/><rect x="1050" y="15" width="1" height="2" fill="#8a8a8a"/><rect x="1057" y="14" width="1" height="3" fill="#8a8a8a"/><rect x="1064" y="15" width="1" height="2" fill="#8a8a8a"/><rect x="1071" y="14" width="1" height="3" fill="#8a8a8a"/><rect x="1077" y="15" width="1" height="2" fill="#8a8a8a"/><rect x="1084" y="14" width="1" height="3" fill="#8a8a8a"/><rect x="1091" y="15" width="1" height="2" fill="#8a8a8a"/><text x="992.3" y="12.8" font-size="9" fill="#a8a8a8" font-family="Liberation Sans">9</text><rect x="1098" y="0" width="1" height="17" fill="#8e8e8e"/><rect x="1104" y="15" width="1" height="2" fill="#8a8a8a"/><rect x="1111" y="14" width="1" height="3" fill="#8a8a8a"/><rect x="1118" y="15" width="1" height="2" fill="#8a8a8a"/><rect x="1125" y="14" width="1" height="3" fill="#8a8a8a"/><rect x="1131" y="15" width="1" height="2" fill="#8a8a8a"/><rect x="1138" y="14" width="1" height="3" fill="#8a8a8a"/><rect x="1145" y="15" width="1" height="2" fill="#8a8a8a"/><rect x="1152" y="11" width="1" height="6" fill="#8a8a8a"/><rect x="1158" y="15" width="1" height="2" fill="#8a8a8a"/><rect x="1165" y="14" width="1" height="3" fill="#8a8a8a"/><rect x="1172" y="15" width="1" height="2" fill="#8a8a8a"/><rect x="1179" y="14" width="1" height="3" fill="#8a8a8a"/><rect x="1185" y="15" width="1" height="2" fill="#8a8a8a"/><rect x="1192" y="14" width="1" height="3" fill="#8a8a8a"/><rect x="1199" y="15" width="1" height="2" fill="#8a8a8a"/><text x="1100.3" y="12.8" font-size="9" fill="#a8a8a8" font-family="Liberation Sans">10</text><rect x="1206" y="0" width="1" height="17" fill="#8e8e8e"/><rect x="1212" y="15" width="1" height="2" fill="#8a8a8a"/><rect x="1219" y="14" width="1" height="3" fill="#8a8a8a"/><rect x="1226" y="15" width="1" height="2" fill="#8a8a8a"/><rect x="1233" y="14" width="1" height="3" fill="#8a8a8a"/><rect x="1239" y="15" width="1" height="2" fill="#8a8a8a"/><rect x="1246" y="14" width="1" height="3" fill="#8a8a8a"/><rect x="1253" y="15" width="1" height="2" fill="#8a8a8a"/><rect x="1260" y="11" width="1" height="6" fill="#8a8a8a"/><rect x="1266" y="15" width="1" height="2" fill="#8a8a8a"/><rect x="1273" y="14" width="1" height="3" fill="#8a8a8a"/><rect x="1280" y="15" width="1" height="2" fill="#8a8a8a"/><rect x="1287" y="14" width="1" height="3" fill="#8a8a8a"/><rect x="1293" y="15" width="1" height="2" fill="#8a8a8a"/><rect x="1300" y="14" width="1" height="3" fill="#8a8a8a"/><rect x="1307" y="15" width="1" height="2" fill="#8a8a8a"/><text x="1208.3" y="12.8" font-size="9" fill="#a8a8a8" font-family="Liberation Sans">11</text><rect x="1314" y="0" width="1" height="17" fill="#8e8e8e"/><rect x="1320" y="15" width="1" height="2" fill="#8a8a8a"/><rect x="1327" y="14" width="1" height="3" fill="#8a8a8a"/><text x="1316.3" y="12.8" font-size="9" fill="#a8a8a8" font-family="Liberation Sans">12</text></svg>
<svg style="left:41px;top:87px" width="17" height="17" viewBox="0 0 17 17" ><rect x="1.0" y="11" width="1" height="1" fill="#6a6a6a"/><rect x="11" y="1.0" width="1" height="1" fill="#6a6a6a"/><rect x="3.2" y="11" width="1" height="1" fill="#6a6a6a"/><rect x="11" y="3.2" width="1" height="1" fill="#6a6a6a"/><rect x="5.4" y="11" width="1" height="1" fill="#6a6a6a"/><rect x="11" y="5.4" width="1" height="1" fill="#6a6a6a"/><rect x="7.6" y="11" width="1" height="1" fill="#6a6a6a"/><rect x="11" y="7.6" width="1" height="1" fill="#6a6a6a"/><rect x="9.8" y="11" width="1" height="1" fill="#6a6a6a"/><rect x="11" y="9.8" width="1" height="1" fill="#6a6a6a"/><rect x="12.0" y="11" width="1" height="1" fill="#6a6a6a"/><rect x="11" y="12.0" width="1" height="1" fill="#6a6a6a"/><rect x="14.2" y="11" width="1" height="1" fill="#6a6a6a"/><rect x="11" y="14.2" width="1" height="1" fill="#6a6a6a"/><rect x="16.4" y="11" width="1" height="1" fill="#6a6a6a"/><rect x="11" y="16.4" width="1" height="1" fill="#6a6a6a"/></svg>
<svg style="left:41px;top:104px" width="17" height="910" viewBox="0 0 17 910" ><rect x="14" y="2" width="3" height="1" fill="#8a8a8a"/><rect x="15" y="9" width="2" height="1" fill="#8a8a8a"/><rect x="14" y="16" width="3" height="1" fill="#8a8a8a"/><rect x="15" y="22" width="2" height="1" fill="#8a8a8a"/><rect x="14" y="29" width="3" height="1" fill="#8a8a8a"/><rect x="15" y="36" width="2" height="1" fill="#8a8a8a"/><rect x="0" y="43" width="17" height="1" fill="#8e8e8e"/><rect x="15" y="49" width="2" height="1" fill="#8a8a8a"/><rect x="14" y="56" width="3" height="1" fill="#8a8a8a"/><rect x="15" y="63" width="2" height="1" fill="#8a8a8a"/><rect x="14" y="70" width="3" height="1" fill="#8a8a8a"/><rect x="15" y="76" width="2" height="1" fill="#8a8a8a"/><rect x="14" y="83" width="3" height="1" fill="#8a8a8a"/><rect x="15" y="90" width="2" height="1" fill="#8a8a8a"/><rect x="11" y="97" width="6" height="1" fill="#8a8a8a"/><rect x="15" y="103" width="2" height="1" fill="#8a8a8a"/><rect x="14" y="110" width="3" height="1" fill="#8a8a8a"/><rect x="15" y="117" width="2" height="1" fill="#8a8a8a"/><rect x="14" y="124" width="3" height="1" fill="#8a8a8a"/><rect x="15" y="130" width="2" height="1" fill="#8a8a8a"/><rect x="14" y="137" width="3" height="1" fill="#8a8a8a"/><rect x="15" y="144" width="2" height="1" fill="#8a8a8a"/><text x="5.8" y="52.2" font-size="9" fill="#a8a8a8" font-family="Liberation Sans">1</text><rect x="0" y="151" width="17" height="1" fill="#8e8e8e"/><rect x="15" y="157" width="2" height="1" fill="#8a8a8a"/><rect x="14" y="164" width="3" height="1" fill="#8a8a8a"/><rect x="15" y="171" width="2" height="1" fill="#8a8a8a"/><rect x="14" y="178" width="3" height="1" fill="#8a8a8a"/><rect x="15" y="184" width="2" height="1" fill="#8a8a8a"/><rect x="14" y="191" width="3" height="1" fill="#8a8a8a"/><rect x="15" y="198" width="2" height="1" fill="#8a8a8a"/><rect x="11" y="205" width="6" height="1" fill="#8a8a8a"/><rect x="15" y="211" width="2" height="1" fill="#8a8a8a"/><rect x="14" y="218" width="3" height="1" fill="#8a8a8a"/><rect x="15" y="225" width="2" height="1" fill="#8a8a8a"/><rect x="14" y="232" width="3" height="1" fill="#8a8a8a"/><rect x="15" y="238" width="2" height="1" fill="#8a8a8a"/><rect x="14" y="245" width="3" height="1" fill="#8a8a8a"/><rect x="15" y="252" width="2" height="1" fill="#8a8a8a"/><text x="5.8" y="160.2" font-size="9" fill="#a8a8a8" font-family="Liberation Sans">0</text><rect x="0" y="259" width="17" height="1" fill="#8e8e8e"/><rect x="15" y="265" width="2" height="1" fill="#8a8a8a"/><rect x="14" y="272" width="3" height="1" fill="#8a8a8a"/><rect x="15" y="279" width="2" height="1" fill="#8a8a8a"/><rect x="14" y="286" width="3" height="1" fill="#8a8a8a"/><rect x="15" y="292" width="2" height="1" fill="#8a8a8a"/><rect x="14" y="299" width="3" height="1" fill="#8a8a8a"/><rect x="15" y="306" width="2" height="1" fill="#8a8a8a"/><rect x="11" y="313" width="6" height="1" fill="#8a8a8a"/><rect x="15" y="319" width="2" height="1" fill="#8a8a8a"/><rect x="14" y="326" width="3" height="1" fill="#8a8a8a"/><rect x="15" y="333" width="2" height="1" fill="#8a8a8a"/><rect x="14" y="340" width="3" height="1" fill="#8a8a8a"/><rect x="15" y="346" width="2" height="1" fill="#8a8a8a"/><rect x="14" y="353" width="3" height="1" fill="#8a8a8a"/><rect x="15" y="360" width="2" height="1" fill="#8a8a8a"/><text x="5.8" y="268.2" font-size="9" fill="#a8a8a8" font-family="Liberation Sans">1</text><rect x="0" y="367" width="17" height="1" fill="#8e8e8e"/><rect x="15" y="373" width="2" height="1" fill="#8a8a8a"/><rect x="14" y="380" width="3" height="1" fill="#8a8a8a"/><rect x="15" y="387" width="2" height="1" fill="#8a8a8a"/><rect x="14" y="394" width="3" height="1" fill="#8a8a8a"/><rect x="15" y="400" width="2" height="1" fill="#8a8a8a"/><rect x="14" y="407" width="3" height="1" fill="#8a8a8a"/><rect x="15" y="414" width="2" height="1" fill="#8a8a8a"/><rect x="11" y="421" width="6" height="1" fill="#8a8a8a"/><rect x="15" y="427" width="2" height="1" fill="#8a8a8a"/><rect x="14" y="434" width="3" height="1" fill="#8a8a8a"/><rect x="15" y="441" width="2" height="1" fill="#8a8a8a"/><rect x="14" y="448" width="3" height="1" fill="#8a8a8a"/><rect x="15" y="454" width="2" height="1" fill="#8a8a8a"/><rect x="14" y="461" width="3" height="1" fill="#8a8a8a"/><rect x="15" y="468" width="2" height="1" fill="#8a8a8a"/><text x="5.8" y="376.2" font-size="9" fill="#a8a8a8" font-family="Liberation Sans">2</text><rect x="0" y="475" width="17" height="1" fill="#8e8e8e"/><rect x="15" y="481" width="2" height="1" fill="#8a8a8a"/><rect x="14" y="488" width="3" height="1" fill="#8a8a8a"/><rect x="15" y="495" width="2" height="1" fill="#8a8a8a"/><rect x="14" y="502" width="3" height="1" fill="#8a8a8a"/><rect x="15" y="508" width="2" height="1" fill="#8a8a8a"/><rect x="14" y="515" width="3" height="1" fill="#8a8a8a"/><rect x="15" y="522" width="2" height="1" fill="#8a8a8a"/><rect x="11" y="529" width="6" height="1" fill="#8a8a8a"/><rect x="15" y="535" width="2" height="1" fill="#8a8a8a"/><rect x="14" y="542" width="3" height="1" fill="#8a8a8a"/><rect x="15" y="549" width="2" height="1" fill="#8a8a8a"/><rect x="14" y="556" width="3" height="1" fill="#8a8a8a"/><rect x="15" y="562" width="2" height="1" fill="#8a8a8a"/><rect x="14" y="569" width="3" height="1" fill="#8a8a8a"/><rect x="15" y="576" width="2" height="1" fill="#8a8a8a"/><text x="5.8" y="484.2" font-size="9" fill="#a8a8a8" font-family="Liberation Sans">3</text><rect x="0" y="583" width="17" height="1" fill="#8e8e8e"/><rect x="15" y="589" width="2" height="1" fill="#8a8a8a"/><rect x="14" y="596" width="3" height="1" fill="#8a8a8a"/><rect x="15" y="603" width="2" height="1" fill="#8a8a8a"/><rect x="14" y="610" width="3" height="1" fill="#8a8a8a"/><rect x="15" y="616" width="2" height="1" fill="#8a8a8a"/><rect x="14" y="623" width="3" height="1" fill="#8a8a8a"/><rect x="15" y="630" width="2" height="1" fill="#8a8a8a"/><rect x="11" y="637" width="6" height="1" fill="#8a8a8a"/><rect x="15" y="643" width="2" height="1" fill="#8a8a8a"/><rect x="14" y="650" width="3" height="1" fill="#8a8a8a"/><rect x="15" y="657" width="2" height="1" fill="#8a8a8a"/><rect x="14" y="664" width="3" height="1" fill="#8a8a8a"/><rect x="15" y="670" width="2" height="1" fill="#8a8a8a"/><rect x="14" y="677" width="3" height="1" fill="#8a8a8a"/><rect x="15" y="684" width="2" height="1" fill="#8a8a8a"/><text x="5.8" y="592.2" font-size="9" fill="#a8a8a8" font-family="Liberation Sans">4</text><rect x="0" y="691" width="17" height="1" fill="#8e8e8e"/><rect x="15" y="697" width="2" height="1" fill="#8a8a8a"/><rect x="14" y="704" width="3" height="1" fill="#8a8a8a"/><rect x="15" y="711" width="2" height="1" fill="#8a8a8a"/><rect x="14" y="718" width="3" height="1" fill="#8a8a8a"/><rect x="15" y="724" width="2" height="1" fill="#8a8a8a"/><rect x="14" y="731" width="3" height="1" fill="#8a8a8a"/><rect x="15" y="738" width="2" height="1" fill="#8a8a8a"/><rect x="11" y="745" width="6" height="1" fill="#8a8a8a"/><rect x="15" y="751" width="2" height="1" fill="#8a8a8a"/><rect x="14" y="758" width="3" height="1" fill="#8a8a8a"/><rect x="15" y="765" width="2" height="1" fill="#8a8a8a"/><rect x="14" y="772" width="3" height="1" fill="#8a8a8a"/><rect x="15" y="778" width="2" height="1" fill="#8a8a8a"/><rect x="14" y="785" width="3" height="1" fill="#8a8a8a"/><rect x="15" y="792" width="2" height="1" fill="#8a8a8a"/><text x="5.8" y="700.2" font-size="9" fill="#a8a8a8" font-family="Liberation Sans">5</text><rect x="0" y="799" width="17" height="1" fill="#8e8e8e"/><rect x="15" y="805" width="2" height="1" fill="#8a8a8a"/><rect x="14" y="812" width="3" height="1" fill="#8a8a8a"/><rect x="15" y="819" width="2" height="1" fill="#8a8a8a"/><rect x="14" y="826" width="3" height="1" fill="#8a8a8a"/><rect x="15" y="832" width="2" height="1" fill="#8a8a8a"/><rect x="14" y="839" width="3" height="1" fill="#8a8a8a"/><rect x="15" y="846" width="2" height="1" fill="#8a8a8a"/><rect x="11" y="853" width="6" height="1" fill="#8a8a8a"/><rect x="15" y="859" width="2" height="1" fill="#8a8a8a"/><rect x="14" y="866" width="3" height="1" fill="#8a8a8a"/><rect x="15" y="873" width="2" height="1" fill="#8a8a8a"/><rect x="14" y="880" width="3" height="1" fill="#8a8a8a"/><rect x="15" y="886" width="2" height="1" fill="#8a8a8a"/><rect x="14" y="893" width="3" height="1" fill="#8a8a8a"/><rect x="15" y="900" width="2" height="1" fill="#8a8a8a"/><text x="5.8" y="808.2" font-size="9" fill="#a8a8a8" font-family="Liberation Sans">6</text><rect x="0" y="907" width="17" height="1" fill="#8e8e8e"/><text x="5.8" y="916.2" font-size="9" fill="#a8a8a8" font-family="Liberation Sans">7</text></svg>
<div class="a" style="left:58px;top:104px;width:1330px;height:910px;background:#282828;"></div>
<div class="a" style="left:76px;top:255px;width:1269px;height:714px;background:#ffffff;box-shadow:0 0 3px 1px #151515"></div>
<svg style="left:0px;top:0px" width="1918" height="1030" viewBox="0 0 1918 1030" ><defs><g id="cupnav"><path d="M537.5,403 Q710,389 884,403 L830.8,906 A121.3,25 0 0 1 588.2,906 Z" fill="url(#gb)"/>
<path d="M548,337 A162,11 0 0 1 872,337 Q876,338 876.5,341 L879.5,365 A169,7 0 0 0 541,365 L544,341 Q544,338 548,337 Z" fill="url(#gl)"/>
<path d="M548,337 A162,11 0 0 1 872,337" fill="none" stroke="#d8d8d8" stroke-width="0.9" opacity="0.7"/>
<path d="M541,365 A169,7 0 0 1 879.5,365 Q895,367 895.5,376 Q895,383 893,388 A183,9 0 0 0 527,388 Q525,383 524.5,376 Q525,367 541,365 Z" fill="url(#gbu)"/>
<path d="M541,365 A169,7 0 0 1 879.5,365 Q895,367 895.5,376 Q895,383 893,388 A183,9 0 0 0 527,388 Q525,383 524.5,376 Q525,367 541,365 Z" fill="url(#gbv)"/>
<path d="M527,387.5 A183,9 0 0 1 893,387.5 Q897,397 902,403 A192,9 0 0 0 518,403 Q523,397 527,387.5 Z" fill="url(#gf)"/>
<path d="M518,403 A192,9 0 0 1 902,403 Q897,405.5 884,405.5 A173,8 0 0 0 537.5,405.5 Q522,405.5 518,403 Z" fill="#939393"/>
<path d="M125.2,594.2 L123.5,595.2 L121.9,596.3 L120.3,597.5 L118.8,598.8 L117.3,600.2 L116.0,601.7 L114.8,603.3 L113.7,604.9 L112.7,606.6 L111.8,608.4 L111.0,610.3 L110.4,612.1 L109.9,614.1 L109.5,616.0 L109.3,618.0 L109.1,620.0 L109.1,622.0 L109.3,624.0 L109.5,625.9 L110.0,627.9 L110.5,629.8 L111.1,631.7 L191.3,838.9 L192.1,840.7 L193.0,842.4 L193.9,844.1 L195.0,845.7 L196.2,847.2 L197.5,848.7 L198.9,850.0 L200.3,851.3 L201.9,852.5 L203.5,853.6 L205.2,854.5 L206.9,855.4 L208.7,856.1 L210.5,856.8 L212.4,857.3 L214.3,857.6 L216.2,857.9 L218.2,858.0 L220.1,858.1 L222.0,857.9 L223.9,857.7 L225.8,857.4 L227.7,856.9 L229.6,856.3 L232.4,855.2 L235.8,854.0 L239.2,852.8 L242.6,851.6 L246.0,850.4 L249.3,849.2 L252.7,848.0 L256.1,846.8 L259.5,845.6 L262.9,844.5 L266.2,843.3 L269.6,842.2 L273.0,841.0 L276.4,839.9 L279.8,838.8 L283.1,837.7 L286.5,836.5 L289.9,835.4 L293.3,834.3 L296.7,833.3 L300.0,832.2 L303.4,831.1 L306.8,830.0 L310.2,829.0 L313.6,827.9 L316.9,826.9 L320.3,825.9 L323.7,824.8 L327.1,823.8 L330.4,822.8 L333.8,821.8 L337.2,820.8 L340.6,819.8 L344.0,818.8 L347.3,817.9 L350.7,816.9 L354.1,815.9 L357.5,815.0 L360.9,814.0 L364.2,813.1 L367.6,812.2 L371.0,811.3 L374.4,810.4 L377.8,809.5 L381.1,808.6 L384.5,807.7 L387.9,806.8 L391.3,805.9 L394.7,805.1 L398.0,804.2 L401.4,803.4 L404.8,802.6 L408.2,801.7 L411.6,800.9 L414.9,800.1 L418.3,799.3 L421.7,798.5 L425.1,797.7 L428.5,796.9 L431.8,796.2 L435.2,795.4 L438.6,794.6 L442.0,793.9 L445.3,793.2 L448.7,792.4 L452.1,791.7 L455.5,791.0 L458.9,790.3 L462.2,789.6 L465.6,788.9 L469.0,788.3 L472.4,787.6 L475.8,786.9 L479.1,786.3 L482.5,785.6 L485.9,785.0 L489.3,784.4 L492.7,783.7 L496.0,783.1 L499.4,782.5 L502.8,781.9 L506.2,781.4 L509.6,780.8 L512.9,780.2 L516.3,779.7 L519.7,779.1 L523.1,778.6 L526.5,778.0 L529.8,777.5 L533.2,777.0 L536.6,776.5 L540.0,776.0 L543.4,775.5 L546.7,775.0 L550.1,774.6 L553.5,774.1 L556.9,773.7 L560.3,773.2 L563.6,772.8 L567.0,772.4 L570.4,771.9 L573.8,771.5 L577.1,771.1 L580.5,770.7 L583.9,770.4 L587.3,770.0 L590.7,769.6 L594.0,769.3 L597.4,768.9 L600.8,768.6 L604.2,768.3 L607.6,767.9 L610.9,767.6 L614.3,767.3 L617.7,767.0 L621.1,766.8 L624.5,766.5 L627.8,766.2 L631.2,766.0 L634.6,765.7 L638.0,765.5 L641.4,765.3 L644.7,765.0 L648.1,764.8 L651.5,764.6 L654.9,764.4 L658.3,764.3 L661.6,764.1 L665.0,763.9 L668.4,763.8 L671.8,763.6 L675.2,763.5 L678.5,763.4 L681.9,763.2 L685.3,763.1 L688.7,763.0 L692.0,762.9 L695.4,762.9 L698.8,762.8 L702.2,762.7 L705.6,762.7 L708.9,762.6 L712.3,762.6 L715.7,762.6 L719.1,762.6 L722.5,762.5 L725.8,762.6 L729.2,762.6 L732.6,762.6 L736.0,762.6 L739.4,762.7 L742.7,762.7 L746.1,762.8 L749.5,762.8 L752.9,762.9 L756.3,763.0 L759.6,763.1 L763.0,763.2 L766.4,763.3 L769.8,763.4 L773.2,763.6 L776.5,763.7 L779.9,763.9 L783.3,764.0 L786.7,764.2 L790.1,764.4 L793.4,764.6 L796.8,764.8 L800.2,765.0 L803.6,765.2 L806.9,765.4 L810.3,765.7 L813.7,765.9 L817.1,766.2 L820.5,766.4 L823.8,766.7 L827.2,767.0 L830.6,767.3 L834.0,767.6 L837.4,767.9 L840.7,768.2 L844.1,768.6 L847.5,768.9 L850.9,769.3 L854.3,769.6 L857.6,770.0 L861.0,770.4 L864.4,770.8 L867.8,771.2 L871.2,771.6 L874.5,772.0 L877.9,772.4 L881.3,772.9 L884.7,773.3 L888.1,773.8 L891.4,774.2 L894.8,774.7 L898.2,775.2 L901.6,775.7 L905.0,776.2 L908.3,776.7 L911.7,777.2 L915.1,777.8 L918.5,778.3 L921.8,778.9 L925.2,779.4 L928.6,780.0 L932.0,780.6 L935.4,781.2 L938.7,781.8 L942.1,782.4 L945.5,783.0 L948.9,783.6 L952.3,784.3 L955.6,784.9 L959.0,785.6 L962.4,786.2 L965.8,786.9 L969.2,787.6 L972.5,788.3 L975.9,789.0 L979.3,789.7 L982.7,790.5 L986.1,791.2 L989.4,791.9 L992.8,792.7 L996.2,793.4 L999.6,794.2 L1003.0,795.0 L1006.3,795.8 L1009.7,796.6 L1013.1,797.4 L1016.5,798.2 L1019.9,799.1 L1023.2,799.9 L1026.6,800.8 L1030.0,801.6 L1033.4,802.5 L1036.8,803.4 L1040.1,804.3 L1043.5,805.2 L1046.9,806.1 L1050.3,807.0 L1053.6,807.9 L1057.0,808.8 L1060.4,809.8 L1063.8,810.8 L1067.2,811.7 L1070.5,812.7 L1073.9,813.7 L1077.3,814.7 L1080.7,815.7 L1084.1,816.7 L1087.4,817.7 L1090.8,818.8 L1094.2,819.8 L1097.6,820.8 L1101.0,821.9 L1104.3,823.0 L1107.7,824.1 L1111.1,825.2 L1114.5,826.3 L1117.9,827.4 L1121.2,828.5 L1124.6,829.6 L1128.0,830.7 L1128.9,831.0 L1135.5,831.0 L1141.2,835.3 L1141.5,835.4 L1144.9,836.6 L1148.3,837.8 L1151.7,839.0 L1155.0,840.2 L1158.4,841.4 L1161.8,842.7 L1165.2,843.9 L1168.5,845.1 L1171.9,846.4 L1175.3,847.7 L1178.7,849.0 L1182.1,850.3 L1185.3,851.5 L1187.1,852.1 L1189.0,852.6 L1190.9,853.0 L1192.8,853.3 L1194.7,853.5 L1196.6,853.5 L1198.6,853.4 L1200.5,853.2 L1202.4,852.8 L1204.3,852.4 L1206.1,851.8 L1207.9,851.1 L1209.7,850.2 L1211.3,849.3 L1213.0,848.3 L1214.5,847.1 L1216.0,845.9 L1217.4,844.6 L1218.7,843.1 L1219.9,841.6 L1221.1,840.1 L1222.1,838.4 L1223.0,836.7 L1223.8,835.0 L1307.5,632.4 L1308.2,630.6 L1308.8,628.7 L1309.2,626.8 L1309.5,624.9 L1309.7,622.9 L1309.8,621.0 L1309.7,619.0 L1309.5,617.1 L1309.2,615.1 L1308.8,613.2 L1308.2,611.4 L1307.5,609.5 L1306.7,607.7 L1305.8,606.0 L1304.8,604.3 L1303.6,602.7 L1302.4,601.2 L1301.0,599.8 L1299.6,598.5 L1298.1,597.2 L1296.5,596.1 L1294.8,595.0 L1293.1,594.1 L1291.3,593.3 L1290.4,592.9 L1290.3,592.8 L1286.3,591.2 L1286.2,591.2 L1282.2,589.5 L1282.1,589.5 L1278.1,587.9 L1278.0,587.8 L1274.1,586.2 L1274.0,586.2 L1270.0,584.6 L1269.9,584.6 L1265.9,583.0 L1265.8,583.0 L1261.8,581.4 L1261.7,581.4 L1257.8,579.8 L1257.7,579.8 L1253.7,578.2 L1253.6,578.2 L1249.6,576.7 L1249.5,576.7 L1245.5,575.2 L1245.4,575.1 L1241.5,573.6 L1241.4,573.6 L1237.4,572.1 L1237.3,572.1 L1233.3,570.6 L1233.2,570.6 L1229.2,569.1 L1229.1,569.1 L1225.1,567.7 L1225.1,567.6 L1221.1,566.2 L1221.0,566.2 L1217.0,564.8 L1216.9,564.7 L1212.9,563.3 L1212.8,563.3 L1208.8,561.9 L1208.8,561.9 L1204.8,560.5 L1204.7,560.5 L1200.7,559.1 L1200.6,559.1 L1196.6,557.7 L1196.5,557.7 L1192.5,556.4 L1192.5,556.4 L1188.5,555.0 L1188.4,555.0 L1184.4,553.7 L1184.3,553.7 L1180.3,552.4 L1180.2,552.4 L1176.2,551.1 L1176.2,551.0 L1172.2,549.8 L1172.1,549.8 L1168.1,548.5 L1168.0,548.5 L1164.0,547.2 L1163.9,547.2 L1159.9,546.0 L1159.8,546.0 L1155.9,544.7 L1155.8,544.7 L1151.8,543.5 L1151.7,543.5 L1147.7,542.3 L1147.6,542.3 L1143.6,541.1 L1143.5,541.1 L1139.6,539.9 L1139.5,539.9 L1135.5,538.7 L1135.4,538.7 L1131.4,537.6 L1131.3,537.5 L1127.3,536.4 L1127.2,536.4 L1123.3,535.3 L1123.2,535.3 L1119.2,534.2 L1119.1,534.1 L1115.1,533.1 L1115.0,533.0 L1111.0,532.0 L1110.9,531.9 L1106.9,530.9 L1106.9,530.9 L1102.9,529.8 L1102.8,529.8 L1098.8,528.7 L1098.7,528.7 L1094.7,527.7 L1094.6,527.7 L1090.6,526.7 L1090.6,526.6 L1086.6,525.7 L1086.5,525.6 L1082.5,524.6 L1082.4,524.6 L1078.4,523.6 L1078.3,523.6 L1074.3,522.7 L1074.3,522.6 L1070.3,521.7 L1070.2,521.7 L1066.2,520.7 L1066.1,520.7 L1062.1,519.8 L1062.0,519.8 L1058.0,518.9 L1058.0,518.8 L1054.0,517.9 L1053.9,517.9 L1049.9,517.0 L1049.8,517.0 L1045.8,516.1 L1045.7,516.1 L1041.7,515.3 L1041.6,515.2 L1037.7,514.4 L1037.6,514.4 L1033.6,513.5 L1033.5,513.5 L1029.5,512.7 L1029.4,512.7 L1025.4,511.9 L1025.3,511.8 L1021.4,511.0 L1021.3,511.0 L1017.3,510.2 L1017.2,510.2 L1013.2,509.4 L1013.1,509.4 L1009.1,508.7 L1009.0,508.6 L1005.1,507.9 L1005.0,507.9 L1001.0,507.1 L1000.9,507.1 L996.9,506.4 L996.8,506.4 L992.8,505.6 L992.7,505.6 L988.7,504.9 L988.7,504.9 L984.7,504.2 L984.6,504.2 L980.6,503.5 L980.5,503.5 L976.5,502.8 L976.4,502.8 L972.4,502.1 L972.4,502.1 L968.4,501.5 L968.3,501.5 L964.3,500.8 L964.2,500.8 L960.2,500.2 L960.1,500.2 L956.1,499.6 L956.1,499.5 L952.1,498.9 L952.0,498.9 L948.0,498.3 L947.9,498.3 L943.9,497.7 L943.8,497.7 L939.8,497.2 L939.8,497.2 L935.8,496.6 L935.7,496.6 L931.7,496.0 L931.6,496.0 L927.6,495.5 L927.5,495.5 L923.5,495.0 L923.5,495.0 L919.5,494.4 L919.4,494.4 L915.4,493.9 L915.3,493.9 L911.3,493.4 L911.2,493.4 L907.2,492.9 L907.1,492.9 L903.2,492.5 L903.1,492.5 L899.1,492.0 L899.0,492.0 L895.0,491.5 L894.9,491.5 L890.9,491.1 L890.8,491.1 L886.9,490.7 L886.8,490.7 L882.8,490.3 L882.7,490.2 L878.7,489.8 L878.6,489.8 L874.6,489.4 L874.5,489.4 L870.5,489.1 L870.5,489.1 L866.5,488.7 L866.4,488.7 L862.4,488.3 L862.3,488.3 L858.3,488.0 L858.2,488.0 L854.2,487.6 L854.2,487.6 L850.2,487.3 L850.1,487.3 L846.1,487.0 L846.0,487.0 L842.0,486.7 L841.9,486.7 L837.9,486.4 L837.9,486.4 L833.9,486.1 L833.8,486.1 L829.8,485.8 L829.7,485.8 L825.7,485.6 L825.6,485.6 L821.6,485.3 L821.6,485.3 L817.6,485.1 L817.5,485.1 L813.5,484.8 L813.4,484.8 L809.4,484.6 L809.3,484.6 L805.3,484.4 L805.3,484.4 L801.3,484.2 L801.2,484.2 L797.2,484.0 L797.1,484.0 L793.1,483.9 L793.0,483.9 L789.0,483.7 L788.9,483.7 L785.0,483.5 L784.9,483.5 L780.9,483.4 L780.8,483.4 L776.8,483.3 L776.7,483.3 L772.7,483.2 L772.6,483.2 L768.6,483.0 L768.6,483.0 L764.6,482.9 L764.5,482.9 L760.5,482.9 L760.4,482.9 L756.4,482.8 L756.3,482.8 L752.3,482.7 L752.3,482.7 L748.3,482.7 L748.2,482.7 L744.2,482.6 L744.1,482.6 L740.1,482.6 L740.0,482.6 L736.0,482.6 L736.0,482.6 L732.0,482.5 L731.9,482.5 L727.9,482.5 L727.8,482.5 L723.8,482.6 L723.7,482.6 L719.7,482.6 L719.7,482.6 L715.7,482.6 L715.6,482.6 L711.6,482.6 L711.5,482.6 L707.5,482.7 L707.4,482.7 L703.4,482.8 L703.4,482.8 L699.4,482.8 L699.3,482.8 L695.3,482.9 L695.2,482.9 L691.2,483.0 L691.1,483.0 L687.1,483.1 L687.1,483.1 L683.1,483.2 L683.0,483.2 L679.0,483.3 L678.9,483.4 L674.9,483.5 L674.8,483.5 L670.8,483.6 L670.8,483.6 L666.8,483.8 L666.7,483.8 L662.7,484.0 L662.6,484.0 L658.6,484.1 L658.5,484.1 L654.5,484.3 L654.4,484.3 L650.4,484.5 L650.4,484.5 L646.4,484.7 L646.3,484.7 L642.3,484.9 L642.2,484.9 L638.2,485.2 L638.1,485.2 L634.1,485.4 L634.1,485.4 L630.1,485.7 L630.0,485.7 L626.0,485.9 L625.9,485.9 L621.9,486.2 L621.8,486.2 L617.8,486.5 L617.8,486.5 L613.8,486.8 L613.7,486.8 L609.7,487.1 L609.6,487.1 L605.6,487.4 L605.5,487.4 L601.5,487.7 L601.5,487.7 L597.5,488.0 L597.4,488.0 L593.4,488.4 L593.3,488.4 L589.3,488.7 L589.2,488.7 L585.2,489.1 L585.2,489.1 L581.2,489.4 L581.1,489.5 L577.1,489.8 L577.0,489.8 L573.0,490.2 L572.9,490.2 L568.9,490.6 L568.9,490.6 L564.9,491.0 L564.8,491.0 L560.8,491.5 L560.7,491.5 L556.7,491.9 L556.6,491.9 L552.6,492.3 L552.6,492.3 L548.5,492.8 L548.5,492.8 L544.5,493.2 L544.4,493.3 L540.4,493.7 L540.3,493.7 L536.3,494.2 L536.2,494.2 L532.2,494.7 L532.2,494.7 L528.2,495.2 L528.1,495.2 L524.1,495.7 L524.0,495.7 L520.0,496.2 L519.9,496.2 L515.9,496.8 L515.9,496.8 L511.9,497.3 L511.8,497.3 L507.8,497.9 L507.7,497.9 L503.7,498.4 L503.6,498.4 L499.6,499.0 L499.6,499.0 L495.6,499.6 L495.5,499.6 L491.5,500.2 L491.4,500.2 L487.4,500.8 L487.3,500.8 L483.3,501.4 L483.3,501.4 L479.3,502.0 L479.2,502.0 L475.2,502.7 L475.1,502.7 L471.1,503.3 L471.0,503.3 L467.0,504.0 L467.0,504.0 L463.0,504.6 L462.9,504.6 L458.9,505.3 L458.8,505.3 L454.8,506.0 L454.7,506.0 L450.7,506.7 L450.7,506.7 L446.7,507.4 L446.6,507.4 L442.6,508.1 L442.5,508.1 L438.5,508.8 L438.4,508.8 L434.4,509.5 L434.4,509.5 L430.3,510.3 L430.3,510.3 L426.3,511.0 L426.2,511.0 L422.2,511.8 L422.1,511.8 L418.1,512.6 L418.1,512.6 L414.0,513.3 L414.0,513.4 L410.0,514.1 L409.9,514.2 L405.9,514.9 L405.8,515.0 L401.8,515.8 L401.7,515.8 L397.7,516.6 L397.7,516.6 L393.7,517.4 L393.6,517.4 L389.6,518.2 L389.5,518.3 L385.5,519.1 L385.4,519.1 L381.4,520.0 L381.4,520.0 L377.4,520.8 L377.3,520.8 L373.3,521.7 L373.2,521.7 L369.2,522.6 L369.1,522.6 L365.1,523.5 L365.1,523.5 L361.1,524.4 L361.0,524.4 L357.0,525.3 L356.9,525.4 L352.9,526.3 L352.8,526.3 L348.8,527.2 L348.8,527.2 L344.8,528.2 L344.7,528.2 L340.7,529.1 L340.6,529.1 L336.6,530.1 L336.5,530.1 L332.5,531.1 L332.5,531.1 L328.5,532.1 L328.4,532.1 L324.4,533.1 L324.3,533.1 L320.3,534.1 L320.2,534.1 L316.2,535.1 L316.2,535.1 L312.1,536.1 L312.1,536.1 L308.1,537.2 L308.0,537.2 L304.0,538.2 L303.9,538.2 L299.9,539.3 L299.9,539.3 L295.8,540.3 L295.8,540.3 L291.8,541.4 L291.7,541.4 L287.7,542.5 L287.6,542.5 L283.6,543.6 L283.6,543.6 L279.5,544.7 L279.5,544.7 L275.5,545.8 L275.4,545.8 L271.4,547.0 L271.3,547.0 L267.3,548.1 L267.2,548.1 L263.2,549.2 L263.2,549.3 L259.2,550.4 L259.1,550.4 L255.1,551.6 L255.0,551.6 L251.0,552.7 L250.9,552.8 L246.9,553.9 L246.9,553.9 L242.9,555.1 L242.8,555.1 L238.8,556.3 L238.7,556.4 L234.7,557.5 L234.6,557.6 L230.6,558.8 L230.6,558.8 L226.6,560.0 L226.5,560.0 L222.5,561.3 L222.4,561.3 L218.4,562.5 L218.3,562.5 L214.3,563.8 L214.3,563.8 L210.2,565.1 L210.2,565.1 L206.2,566.3 L206.1,566.4 L202.1,567.6 L202.0,567.7 L198.0,569.0 L198.0,569.0 L197.4,569.2 L191.0,574.4 L183.7,573.6 L181.7,574.3 L181.7,574.3 L177.6,575.6 L177.6,575.7 L173.6,577.0 L173.5,577.0 L169.5,578.4 L169.4,578.4 L165.4,579.8 L165.4,579.8 L161.3,581.2 L161.3,581.2 L157.3,582.6 L157.2,582.6 L153.2,584.0 L153.1,584.0 L149.1,585.4 L149.0,585.4 L145.0,586.8 L145.0,586.9 L141.0,588.3 L140.9,588.3 L136.9,589.8 L136.8,589.8 L132.8,591.2 L132.7,591.2 L128.9,592.6 L127.0,593.4 L125.2,594.2Z" fill="#03adfd"/></g></defs></svg>
<svg style="left:0px;top:0px" width="1918" height="1030" viewBox="0 0 1918 1030" ><g id="cupall"><defs><linearGradient id="gb" x1="537" y1="0" x2="884" y2="0" gradientUnits="userSpaceOnUse"><stop offset="0.0000" stop-color="#d4d4d4"/><stop offset="0.0375" stop-color="#ececec"/><stop offset="0.1816" stop-color="#f3f3f3"/><stop offset="0.3545" stop-color="#ebebeb"/><stop offset="0.4986" stop-color="#dcdcdc"/><stop offset="0.5994" stop-color="#c4c4c4"/><stop offset="0.6859" stop-color="#a2a2a2"/><stop offset="0.7579" stop-color="#8c8c8c"/><stop offset="0.8012" stop-color="#898989"/><stop offset="0.8588" stop-color="#a4a4a4"/><stop offset="0.9020" stop-color="#c2c2c2"/><stop offset="0.9452" stop-color="#c6c6c6"/><stop offset="1.0000" stop-color="#aeaeae"/></linearGradient><linearGradient id="gl" x1="541" y1="0" x2="879" y2="0" gradientUnits="userSpaceOnUse"><stop offset="0.0000" stop-color="#b6b6b6"/><stop offset="0.0207" stop-color="#c0c0c0"/><stop offset="0.1036" stop-color="#bababa"/><stop offset="0.2456" stop-color="#afafaf"/><stop offset="0.3876" stop-color="#a2a2a2"/><stop offset="0.4941" stop-color="#9a9a9a"/><stop offset="0.5296" stop-color="#9e9e9e"/><stop offset="0.6006" stop-color="#8e8e8e"/><stop offset="0.6716" stop-color="#767676"/><stop offset="0.7426" stop-color="#676767"/><stop offset="0.8136" stop-color="#656565"/><stop offset="0.8698" stop-color="#757575"/><stop offset="0.9260" stop-color="#9c9c9c"/><stop offset="0.9675" stop-color="#bebebe"/><stop offset="1.0000" stop-color="#929292"/></linearGradient><linearGradient id="gbu" x1="525" y1="0" x2="895" y2="0" gradientUnits="userSpaceOnUse"><stop offset="0.0000" stop-color="#b2b2b2"/><stop offset="0.0405" stop-color="#c0c0c0"/><stop offset="0.2027" stop-color="#bababa"/><stop offset="0.3649" stop-color="#b0b0b0"/><stop offset="0.5270" stop-color="#a8a8a8"/><stop offset="0.6351" stop-color="#929292"/><stop offset="0.7162" stop-color="#7e7e7e"/><stop offset="0.8243" stop-color="#808080"/><stop offset="0.9054" stop-color="#a2a2a2"/><stop offset="0.9595" stop-color="#bcbcbc"/><stop offset="1.0000" stop-color="#989898"/></linearGradient><linearGradient id="gf" x1="519" y1="0" x2="901" y2="0" gradientUnits="userSpaceOnUse"><stop offset="0.0000" stop-color="#b0b0b0"/><stop offset="0.0550" stop-color="#c4c4c4"/><stop offset="0.2644" stop-color="#d2d2d2"/><stop offset="0.4215" stop-color="#d8d8d8"/><stop offset="0.5524" stop-color="#c4c4c4"/><stop offset="0.7094" stop-color="#a8a8a8"/><stop offset="0.8141" stop-color="#ababab"/><stop offset="0.8979" stop-color="#d0d0d0"/><stop offset="0.9581" stop-color="#c0c0c0"/><stop offset="1.0000" stop-color="#a0a0a0"/></linearGradient>
<linearGradient id="gs" x1="0" y1="398" x2="0" y2="470" gradientUnits="userSpaceOnUse">
<stop offset="0" stop-color="#000" stop-opacity="0.26"/>
<stop offset="0.3" stop-color="#000" stop-opacity="0.1"/>
<stop offset="1" stop-color="#000" stop-opacity="0"/>
</linearGradient>
<linearGradient id="gbv" x1="0" y1="358" x2="0" y2="387" gradientUnits="userSpaceOnUse">
<stop offset="0" stop-color="#fff" stop-opacity="0.0"/>
<stop offset="0.2" stop-color="#fff" stop-opacity="0.22"/>
<stop offset="0.45" stop-color="#fff" stop-opacity="0.0"/>
<stop offset="0.7" stop-color="#000" stop-opacity="0.12"/>
<stop offset="1" stop-color="#000" stop-opacity="0.0"/>
</linearGradient>
</defs>
<clipPath id="bodyclip"><path d="M537.5,403 Q710,389 884,403 L830.8,906 A121.3,25 0 0 1 588.2,906 Z"/></clipPath><g clip-path="url(#bodyclip)"><path d="M535.69,385 L540.36,385 L594.77,940 L591.63,940Z" fill="#d8d8d8"/><path d="M538.60,385 L543.27,385 L596.73,940 L593.59,940Z" fill="#dcdcdc"/><path d="M541.52,385 L546.19,385 L598.70,940 L595.56,940Z" fill="#e0e0e0"/><path d="M544.44,385 L549.11,385 L600.66,940 L597.52,940Z" fill="#e5e5e5"/><path d="M547.36,385 L552.03,385 L602.62,940 L599.48,940Z" fill="#e9e9e9"/><path d="M550.28,385 L554.95,385 L604.59,940 L601.45,940Z" fill="#ebebeb"/><path d="M553.20,385 L557.87,385 L606.55,940 L603.41,940Z" fill="#ececec"/><path d="M556.11,385 L560.78,385 L608.51,940 L605.37,940Z" fill="#ededed"/><path d="M559.03,385 L563.70,385 L610.48,940 L607.34,940Z" fill="#eeeeee"/><path d="M561.95,385 L566.62,385 L612.44,940 L609.30,940Z" fill="#efefef"/><path d="M564.87,385 L569.54,385 L614.41,940 L611.26,940Z" fill="#f1f1f1"/><path d="M567.79,385 L572.46,385 L616.37,940 L613.23,940Z" fill="#f1f1f1"/><path d="M570.71,385 L575.38,385 L618.33,940 L615.19,940Z" fill="#f1f1f1"/><path d="M573.63,385 L578.30,385 L620.30,940 L617.15,940Z" fill="#f1f1f1"/><path d="M576.54,385 L581.21,385 L622.26,940 L619.12,940Z" fill="#f0f0f0"/><path d="M579.46,385 L584.13,385 L624.22,940 L621.08,940Z" fill="#f0f0f0"/><path d="M582.38,385 L587.05,385 L626.19,940 L623.04,940Z" fill="#f0f0f0"/><path d="M585.30,385 L589.97,385 L628.15,940 L625.01,940Z" fill="#f0f0f0"/><path d="M588.22,385 L592.89,385 L630.11,940 L626.97,940Z" fill="#f0f0f0"/><path d="M591.14,385 L595.81,385 L632.08,940 L628.93,940Z" fill="#f0f0f0"/><path d="M594.06,385 L598.72,385 L634.04,940 L630.90,940Z" fill="#f0f0f0"/><path d="M596.97,385 L601.64,385 L636.00,940 L632.86,940Z" fill="#efefef"/><path d="M599.89,385 L604.56,385 L637.97,940 L634.82,940Z" fill="#efefef"/><path d="M602.81,385 L607.48,385 L639.93,940 L636.79,940Z" fill="#efefef"/><path d="M605.73,385 L610.40,385 L641.89,940 L638.75,940Z" fill="#efefef"/><path d="M608.65,385 L613.32,385 L643.86,940 L640.71,940Z" fill="#efefef"/><path d="M611.57,385 L616.24,385 L645.82,940 L642.68,940Z" fill="#efefef"/><path d="M614.48,385 L619.15,385 L647.78,940 L644.64,940Z" fill="#efefef"/><path d="M617.40,385 L622.07,385 L649.75,940 L646.61,940Z" fill="#eeeeee"/><path d="M620.32,385 L624.99,385 L651.71,940 L648.57,940Z" fill="#eeeeee"/><path d="M623.24,385 L627.91,385 L653.67,940 L650.53,940Z" fill="#eeeeee"/><path d="M626.16,385 L630.83,385 L655.64,940 L652.50,940Z" fill="#eeeeee"/><path d="M629.08,385 L633.75,385 L657.60,940 L654.46,940Z" fill="#ededed"/><path d="M632.00,385 L636.66,385 L659.56,940 L656.42,940Z" fill="#ededed"/><path d="M634.91,385 L639.58,385 L661.53,940 L658.39,940Z" fill="#ececec"/><path d="M637.83,385 L642.50,385 L663.49,940 L660.35,940Z" fill="#ebebeb"/><path d="M640.75,385 L645.42,385 L665.45,940 L662.31,940Z" fill="#ebebeb"/><path d="M643.67,385 L648.34,385 L667.42,940 L664.28,940Z" fill="#eaeaea"/><path d="M646.59,385 L651.26,385 L669.38,940 L666.24,940Z" fill="#eaeaea"/><path d="M649.51,385 L654.18,385 L671.34,940 L668.20,940Z" fill="#e9e9e9"/><path d="M652.42,385 L657.09,385 L673.31,940 L670.17,940Z" fill="#e8e8e8"/><path d="M655.34,385 L660.01,385 L675.27,940 L672.13,940Z" fill="#e8e8e8"/><path d="M658.26,385 L662.93,385 L677.23,940 L674.09,940Z" fill="#e7e7e7"/><path d="M661.18,385 L665.85,385 L679.20,940 L676.06,940Z" fill="#e6e6e6"/><path d="M664.10,385 L668.77,385 L681.16,940 L678.02,940Z" fill="#e6e6e6"/><path d="M667.02,385 L671.69,385 L683.12,940 L679.98,940Z" fill="#e5e5e5"/><path d="M669.94,385 L674.61,385 L685.09,940 L681.95,940Z" fill="#e5e5e5"/><path d="M672.85,385 L677.52,385 L687.05,940 L683.91,940Z" fill="#e4e4e4"/><path d="M675.77,385 L680.44,385 L689.01,940 L685.87,940Z" fill="#e3e3e3"/><path d="M678.69,385 L683.36,385 L690.98,940 L687.84,940Z" fill="#e3e3e3"/><path d="M681.61,385 L686.28,385 L692.94,940 L689.80,940Z" fill="#e2e2e2"/><path d="M684.53,385 L689.20,385 L694.91,940 L691.76,940Z" fill="#e2e2e2"/><path d="M687.45,385 L692.12,385 L696.87,940 L693.73,940Z" fill="#e1e1e1"/><path d="M690.36,385 L695.03,385 L698.83,940 L695.69,940Z" fill="#e0e0e0"/><path d="M693.28,385 L697.95,385 L700.80,940 L697.65,940Z" fill="#dfdfdf"/><path d="M696.20,385 L700.87,385 L702.76,940 L699.62,940Z" fill="#dedede"/><path d="M699.12,385 L703.79,385 L704.72,940 L701.58,940Z" fill="#dddddd"/><path d="M702.04,385 L706.71,385 L706.69,940 L703.54,940Z" fill="#dbdbdb"/><path d="M704.96,385 L709.63,385 L708.65,940 L705.51,940Z" fill="#dadada"/><path d="M707.88,385 L712.55,385 L710.61,940 L707.47,940Z" fill="#d9d9d9"/><path d="M710.79,385 L715.46,385 L712.58,940 L709.43,940Z" fill="#d7d7d7"/><path d="M713.71,385 L718.38,385 L714.54,940 L711.40,940Z" fill="#d6d6d6"/><path d="M716.63,385 L721.30,385 L716.50,940 L713.36,940Z" fill="#d5d5d5"/><path d="M719.55,385 L724.22,385 L718.47,940 L715.32,940Z" fill="#d3d3d3"/><path d="M722.47,385 L727.14,385 L720.43,940 L717.29,940Z" fill="#d2d2d2"/><path d="M725.39,385 L730.06,385 L722.39,940 L719.25,940Z" fill="#d1d1d1"/><path d="M728.30,385 L732.97,385 L724.36,940 L721.21,940Z" fill="#cfcfcf"/><path d="M731.22,385 L735.89,385 L726.32,940 L723.18,940Z" fill="#cecece"/><path d="M734.14,385 L738.81,385 L728.28,940 L725.14,940Z" fill="#cccccc"/><path d="M737.06,385 L741.73,385 L730.25,940 L727.11,940Z" fill="#cbcbcb"/><path d="M739.98,385 L744.65,385 L732.21,940 L729.07,940Z" fill="#c9c9c9"/><path d="M742.90,385 L747.57,385 L734.17,940 L731.03,940Z" fill="#c6c6c6"/><path d="M745.82,385 L750.49,385 L736.14,940 L733.00,940Z" fill="#c4c4c4"/><path d="M748.73,385 L753.40,385 L738.10,940 L734.96,940Z" fill="#c1c1c1"/><path d="M751.65,385 L756.32,385 L740.06,940 L736.92,940Z" fill="#bfbfbf"/><path d="M754.57,385 L759.24,385 L742.03,940 L738.89,940Z" fill="#bcbcbc"/><path d="M757.49,385 L762.16,385 L743.99,940 L740.85,940Z" fill="#bababa"/><path d="M760.41,385 L765.08,385 L745.95,940 L742.81,940Z" fill="#b7b7b7"/><path d="M763.33,385 L768.00,385 L747.92,940 L744.78,940Z" fill="#b5b5b5"/><path d="M766.25,385 L770.91,385 L749.88,940 L746.74,940Z" fill="#b2b2b2"/><path d="M769.16,385 L773.83,385 L751.84,940 L748.70,940Z" fill="#b0b0b0"/><path d="M772.08,385 L776.75,385 L753.81,940 L750.67,940Z" fill="#adadad"/><path d="M775.00,385 L779.67,385 L755.77,940 L752.63,940Z" fill="#aaaaaa"/><path d="M777.92,385 L782.59,385 L757.73,940 L754.59,940Z" fill="#a7a7a7"/><path d="M780.84,385 L785.51,385 L759.70,940 L756.56,940Z" fill="#a4a4a4"/><path d="M783.76,385 L788.43,385 L761.66,940 L758.52,940Z" fill="#a1a1a1"/><path d="M786.67,385 L791.34,385 L763.62,940 L760.48,940Z" fill="#9e9e9e"/><path d="M789.59,385 L794.26,385 L765.59,940 L762.45,940Z" fill="#9b9b9b"/><path d="M792.51,385 L797.18,385 L767.55,940 L764.41,940Z" fill="#989898"/><path d="M795.43,385 L800.10,385 L769.51,940 L766.37,940Z" fill="#959595"/><path d="M798.35,385 L803.02,385 L771.48,940 L768.34,940Z" fill="#929292"/><path d="M801.27,385 L805.94,385 L773.44,940 L770.30,940Z" fill="#919191"/><path d="M804.19,385 L808.85,385 L775.41,940 L772.26,940Z" fill="#909090"/><path d="M807.10,385 L811.77,385 L777.37,940 L774.23,940Z" fill="#8f8f8f"/><path d="M810.02,385 L814.69,385 L779.33,940 L776.19,940Z" fill="#8e8e8e"/><path d="M812.94,385 L817.61,385 L781.30,940 L778.15,940Z" fill="#8c8c8c"/><path d="M815.86,385 L820.53,385 L783.26,940 L780.12,940Z" fill="#8b8b8b"/><path d="M818.78,385 L823.45,385 L785.22,940 L782.08,940Z" fill="#8a8a8a"/><path d="M821.70,385 L826.37,385 L787.19,940 L784.04,940Z" fill="#898989"/><path d="M824.61,385 L829.28,385 L789.15,940 L786.01,940Z" fill="#8c8c8c"/><path d="M827.53,385 L832.20,385 L791.11,940 L787.97,940Z" fill="#8f8f8f"/><path d="M830.45,385 L835.12,385 L793.08,940 L789.93,940Z" fill="#929292"/><path d="M833.37,385 L838.04,385 L795.04,940 L791.90,940Z" fill="#959595"/><path d="M836.29,385 L840.96,385 L797.00,940 L793.86,940Z" fill="#989898"/><path d="M839.21,385 L843.88,385 L798.97,940 L795.82,940Z" fill="#9b9b9b"/><path d="M842.13,385 L846.80,385 L800.93,940 L797.79,940Z" fill="#9f9f9f"/><path d="M845.04,385 L849.71,385 L802.89,940 L799.75,940Z" fill="#a5a5a5"/><path d="M847.96,385 L852.63,385 L804.86,940 L801.71,940Z" fill="#ababab"/><path d="M850.88,385 L855.55,385 L806.82,940 L803.68,940Z" fill="#b1b1b1"/><path d="M853.80,385 L858.47,385 L808.78,940 L805.64,940Z" fill="#b7b7b7"/><path d="M856.72,385 L861.39,385 L810.75,940 L807.60,940Z" fill="#bcbcbc"/><path d="M859.64,385 L864.31,385 L812.71,940 L809.57,940Z" fill="#bebebe"/><path d="M862.55,385 L867.22,385 L814.67,940 L811.53,940Z" fill="#c0c0c0"/><path d="M865.47,385 L870.14,385 L816.64,940 L813.50,940Z" fill="#c2c2c2"/><path d="M868.39,385 L873.06,385 L818.60,940 L815.46,940Z" fill="#c4c4c4"/><path d="M871.31,385 L875.98,385 L820.56,940 L817.42,940Z" fill="#c5c5c5"/><path d="M874.23,385 L878.90,385 L822.53,940 L819.39,940Z" fill="#c3c3c3"/><path d="M877.15,385 L881.82,385 L824.49,940 L821.35,940Z" fill="#bebebe"/><path d="M880.07,385 L884.74,385 L826.45,940 L823.31,940Z" fill="#b9b9b9"/><path d="M882.98,385 L885.90,385 L827.24,940 L825.28,940Z" fill="#b4b4b4"/><rect x="500" y="385" width="420" height="560" fill="url(#gs)"/></g><path d="M588.2,906 A121.3,25 0 0 0 830.8,906" fill="none" stroke="#a0a0a0" stroke-width="1"/>
<path d="M548,337 A162,11 0 0 1 872,337 Q876,338 876.5,341 L879.5,365 A169,7 0 0 0 541,365 L544,341 Q544,338 548,337 Z" fill="url(#gl)"/>
<path d="M548,337 A162,11 0 0 1 872,337" fill="none" stroke="#d8d8d8" stroke-width="0.9" opacity="0.7"/>
<path d="M541,365 A169,7 0 0 1 879.5,365 Q895,367 895.5,376 Q895,383 893,388 A183,9 0 0 0 527,388 Q525,383 524.5,376 Q525,367 541,365 Z" fill="url(#gbu)"/>
<path d="M541,365 A169,7 0 0 1 879.5,365 Q895,367 895.5,376 Q895,383 893,388 A183,9 0 0 0 527,388 Q525,383 524.5,376 Q525,367 541,365 Z" fill="url(#gbv)"/>
<path d="M527,387.5 A183,9 0 0 1 893,387.5 Q897,397 902,403 A192,9 0 0 0 518,403 Q523,397 527,387.5 Z" fill="url(#gf)"/>
<path d="M518,403 A192,9 0 0 1 902,403 Q897,405.5 884,405.5 A173,8 0 0 0 537.5,405.5 Q522,405.5 518,403 Z" fill="#939393"/>
<path d="M125.2,594.2 L123.5,595.2 L121.9,596.3 L120.3,597.5 L118.8,598.8 L117.3,600.2 L116.0,601.7 L114.8,603.3 L113.7,604.9 L112.7,606.6 L111.8,608.4 L111.0,610.3 L110.4,612.1 L109.9,614.1 L109.5,616.0 L109.3,618.0 L109.1,620.0 L109.1,622.0 L109.3,624.0 L109.5,625.9 L110.0,627.9 L110.5,629.8 L111.1,631.7 L191.3,838.9 L192.1,840.7 L193.0,842.4 L193.9,844.1 L195.0,845.7 L196.2,847.2 L197.5,848.7 L198.9,850.0 L200.3,851.3 L201.9,852.5 L203.5,853.6 L205.2,854.5 L206.9,855.4 L208.7,856.1 L210.5,856.8 L212.4,857.3 L214.3,857.6 L216.2,857.9 L218.2,858.0 L220.1,858.1 L222.0,857.9 L223.9,857.7 L225.8,857.4 L227.7,856.9 L229.6,856.3 L232.4,855.2 L235.8,854.0 L239.2,852.8 L242.6,851.6 L246.0,850.4 L249.3,849.2 L252.7,848.0 L256.1,846.8 L259.5,845.6 L262.9,844.5 L266.2,843.3 L269.6,842.2 L273.0,841.0 L276.4,839.9 L279.8,838.8 L283.1,837.7 L286.5,836.5 L289.9,835.4 L293.3,834.3 L296.7,833.3 L300.0,832.2 L303.4,831.1 L306.8,830.0 L310.2,829.0 L313.6,827.9 L316.9,826.9 L320.3,825.9 L323.7,824.8 L327.1,823.8 L330.4,822.8 L333.8,821.8 L337.2,820.8 L340.6,819.8 L344.0,818.8 L347.3,817.9 L350.7,816.9 L354.1,815.9 L357.5,815.0 L360.9,814.0 L364.2,813.1 L367.6,812.2 L371.0,811.3 L374.4,810.4 L377.8,809.5 L381.1,808.6 L384.5,807.7 L387.9,806.8 L391.3,805.9 L394.7,805.1 L398.0,804.2 L401.4,803.4 L404.8,802.6 L408.2,801.7 L411.6,800.9 L414.9,800.1 L418.3,799.3 L421.7,798.5 L425.1,797.7 L428.5,796.9 L431.8,796.2 L435.2,795.4 L438.6,794.6 L442.0,793.9 L445.3,793.2 L448.7,792.4 L452.1,791.7 L455.5,791.0 L458.9,790.3 L462.2,789.6 L465.6,788.9 L469.0,788.3 L472.4,787.6 L475.8,786.9 L479.1,786.3 L482.5,785.6 L485.9,785.0 L489.3,784.4 L492.7,783.7 L496.0,783.1 L499.4,782.5 L502.8,781.9 L506.2,781.4 L509.6,780.8 L512.9,780.2 L516.3,779.7 L519.7,779.1 L523.1,778.6 L526.5,778.0 L529.8,777.5 L533.2,777.0 L536.6,776.5 L540.0,776.0 L543.4,775.5 L546.7,775.0 L550.1,774.6 L553.5,774.1 L556.9,773.7 L560.3,773.2 L563.6,772.8 L567.0,772.4 L570.4,771.9 L573.8,771.5 L577.1,771.1 L580.5,770.7 L583.9,770.4 L587.3,770.0 L590.7,769.6 L594.0,769.3 L597.4,768.9 L600.8,768.6 L604.2,768.3 L607.6,767.9 L610.9,767.6 L614.3,767.3 L617.7,767.0 L621.1,766.8 L624.5,766.5 L627.8,766.2 L631.2,766.0 L634.6,765.7 L638.0,765.5 L641.4,765.3 L644.7,765.0 L648.1,764.8 L651.5,764.6 L654.9,764.4 L658.3,764.3 L661.6,764.1 L665.0,763.9 L668.4,763.8 L671.8,763.6 L675.2,763.5 L678.5,763.4 L681.9,763.2 L685.3,763.1 L688.7,763.0 L692.0,762.9 L695.4,762.9 L698.8,762.8 L702.2,762.7 L705.6,762.7 L708.9,762.6 L712.3,762.6 L715.7,762.6 L719.1,762.6 L722.5,762.5 L725.8,762.6 L729.2,762.6 L732.6,762.6 L736.0,762.6 L739.4,762.7 L742.7,762.7 L746.1,762.8 L749.5,762.8 L752.9,762.9 L756.3,763.0 L759.6,763.1 L763.0,763.2 L766.4,763.3 L769.8,763.4 L773.2,763.6 L776.5,763.7 L779.9,763.9 L783.3,764.0 L786.7,764.2 L790.1,764.4 L793.4,764.6 L796.8,764.8 L800.2,765.0 L803.6,765.2 L806.9,765.4 L810.3,765.7 L813.7,765.9 L817.1,766.2 L820.5,766.4 L823.8,766.7 L827.2,767.0 L830.6,767.3 L834.0,767.6 L837.4,767.9 L840.7,768.2 L844.1,768.6 L847.5,768.9 L850.9,769.3 L854.3,769.6 L857.6,770.0 L861.0,770.4 L864.4,770.8 L867.8,771.2 L871.2,771.6 L874.5,772.0 L877.9,772.4 L881.3,772.9 L884.7,773.3 L888.1,773.8 L891.4,774.2 L894.8,774.7 L898.2,775.2 L901.6,775.7 L905.0,776.2 L908.3,776.7 L911.7,777.2 L915.1,777.8 L918.5,778.3 L921.8,778.9 L925.2,779.4 L928.6,780.0 L932.0,780.6 L935.4,781.2 L938.7,781.8 L942.1,782.4 L945.5,783.0 L948.9,783.6 L952.3,784.3 L955.6,784.9 L959.0,785.6 L962.4,786.2 L965.8,786.9 L969.2,787.6 L972.5,788.3 L975.9,789.0 L979.3,789.7 L982.7,790.5 L986.1,791.2 L989.4,791.9 L992.8,792.7 L996.2,793.4 L999.6,794.2 L1003.0,795.0 L1006.3,795.8 L1009.7,796.6 L1013.1,797.4 L1016.5,798.2 L1019.9,799.1 L1023.2,799.9 L1026.6,800.8 L1030.0,801.6 L1033.4,802.5 L1036.8,803.4 L1040.1,804.3 L1043.5,805.2 L1046.9,806.1 L1050.3,807.0 L1053.6,807.9 L1057.0,808.8 L1060.4,809.8 L1063.8,810.8 L1067.2,811.7 L1070.5,812.7 L1073.9,813.7 L1077.3,814.7 L1080.7,815.7 L1084.1,816.7 L1087.4,817.7 L1090.8,818.8 L1094.2,819.8 L1097.6,820.8 L1101.0,821.9 L1104.3,823.0 L1107.7,824.1 L1111.1,825.2 L1114.5,826.3 L1117.9,827.4 L1121.2,828.5 L1124.6,829.6 L1128.0,830.7 L1128.9,831.0 L1135.5,831.0 L1141.2,835.3 L1141.5,835.4 L1144.9,836.6 L1148.3,837.8 L1151.7,839.0 L1155.0,840.2 L1158.4,841.4 L1161.8,842.7 L1165.2,843.9 L1168.5,845.1 L1171.9,846.4 L1175.3,847.7 L1178.7,849.0 L1182.1,850.3 L1185.3,851.5 L1187.1,852.1 L1189.0,852.6 L1190.9,853.0 L1192.8,853.3 L1194.7,853.5 L1196.6,853.5 L1198.6,853.4 L1200.5,853.2 L1202.4,852.8 L1204.3,852.4 L1206.1,851.8 L1207.9,851.1 L1209.7,850.2 L1211.3,849.3 L1213.0,848.3 L1214.5,847.1 L1216.0,845.9 L1217.4,844.6 L1218.7,843.1 L1219.9,841.6 L1221.1,840.1 L1222.1,838.4 L1223.0,836.7 L1223.8,835.0 L1307.5,632.4 L1308.2,630.6 L1308.8,628.7 L1309.2,626.8 L1309.5,624.9 L1309.7,622.9 L1309.8,621.0 L1309.7,619.0 L1309.5,617.1 L1309.2,615.1 L1308.8,613.2 L1308.2,611.4 L1307.5,609.5 L1306.7,607.7 L1305.8,606.0 L1304.8,604.3 L1303.6,602.7 L1302.4,601.2 L1301.0,599.8 L1299.6,598.5 L1298.1,597.2 L1296.5,596.1 L1294.8,595.0 L1293.1,594.1 L1291.3,593.3 L1290.4,592.9 L1290.3,592.8 L1286.3,591.2 L1286.2,591.2 L1282.2,589.5 L1282.1,589.5 L1278.1,587.9 L1278.0,587.8 L1274.1,586.2 L1274.0,586.2 L1270.0,584.6 L1269.9,584.6 L1265.9,583.0 L1265.8,583.0 L1261.8,581.4 L1261.7,581.4 L1257.8,579.8 L1257.7,579.8 L1253.7,578.2 L1253.6,578.2 L1249.6,576.7 L1249.5,576.7 L1245.5,575.2 L1245.4,575.1 L1241.5,573.6 L1241.4,573.6 L1237.4,572.1 L1237.3,572.1 L1233.3,570.6 L1233.2,570.6 L1229.2,569.1 L1229.1,569.1 L1225.1,567.7 L1225.1,567.6 L1221.1,566.2 L1221.0,566.2 L1217.0,564.8 L1216.9,564.7 L1212.9,563.3 L1212.8,563.3 L1208.8,561.9 L1208.8,561.9 L1204.8,560.5 L1204.7,560.5 L1200.7,559.1 L1200.6,559.1 L1196.6,557.7 L1196.5,557.7 L1192.5,556.4 L1192.5,556.4 L1188.5,555.0 L1188.4,555.0 L1184.4,553.7 L1184.3,553.7 L1180.3,552.4 L1180.2,552.4 L1176.2,551.1 L1176.2,551.0 L1172.2,549.8 L1172.1,549.8 L1168.1,548.5 L1168.0,548.5 L1164.0,547.2 L1163.9,547.2 L1159.9,546.0 L1159.8,546.0 L1155.9,544.7 L1155.8,544.7 L1151.8,543.5 L1151.7,543.5 L1147.7,542.3 L1147.6,542.3 L1143.6,541.1 L1143.5,541.1 L1139.6,539.9 L1139.5,539.9 L1135.5,538.7 L1135.4,538.7 L1131.4,537.6 L1131.3,537.5 L1127.3,536.4 L1127.2,536.4 L1123.3,535.3 L1123.2,535.3 L1119.2,534.2 L1119.1,534.1 L1115.1,533.1 L1115.0,533.0 L1111.0,532.0 L1110.9,531.9 L1106.9,530.9 L1106.9,530.9 L1102.9,529.8 L1102.8,529.8 L1098.8,528.7 L1098.7,528.7 L1094.7,527.7 L1094.6,527.7 L1090.6,526.7 L1090.6,526.6 L1086.6,525.7 L1086.5,525.6 L1082.5,524.6 L1082.4,524.6 L1078.4,523.6 L1078.3,523.6 L1074.3,522.7 L1074.3,522.6 L1070.3,521.7 L1070.2,521.7 L1066.2,520.7 L1066.1,520.7 L1062.1,519.8 L1062.0,519.8 L1058.0,518.9 L1058.0,518.8 L1054.0,517.9 L1053.9,517.9 L1049.9,517.0 L1049.8,517.0 L1045.8,516.1 L1045.7,516.1 L1041.7,515.3 L1041.6,515.2 L1037.7,514.4 L1037.6,514.4 L1033.6,513.5 L1033.5,513.5 L1029.5,512.7 L1029.4,512.7 L1025.4,511.9 L1025.3,511.8 L1021.4,511.0 L1021.3,511.0 L1017.3,510.2 L1017.2,510.2 L1013.2,509.4 L1013.1,509.4 L1009.1,508.7 L1009.0,508.6 L1005.1,507.9 L1005.0,507.9 L1001.0,507.1 L1000.9,507.1 L996.9,506.4 L996.8,506.4 L992.8,505.6 L992.7,505.6 L988.7,504.9 L988.7,504.9 L984.7,504.2 L984.6,504.2 L980.6,503.5 L980.5,503.5 L976.5,502.8 L976.4,502.8 L972.4,502.1 L972.4,502.1 L968.4,501.5 L968.3,501.5 L964.3,500.8 L964.2,500.8 L960.2,500.2 L960.1,500.2 L956.1,499.6 L956.1,499.5 L952.1,498.9 L952.0,498.9 L948.0,498.3 L947.9,498.3 L943.9,497.7 L943.8,497.7 L939.8,497.2 L939.8,497.2 L935.8,496.6 L935.7,496.6 L931.7,496.0 L931.6,496.0 L927.6,495.5 L927.5,495.5 L923.5,495.0 L923.5,495.0 L919.5,494.4 L919.4,494.4 L915.4,493.9 L915.3,493.9 L911.3,493.4 L911.2,493.4 L907.2,492.9 L907.1,492.9 L903.2,492.5 L903.1,492.5 L899.1,492.0 L899.0,492.0 L895.0,491.5 L894.9,491.5 L890.9,491.1 L890.8,491.1 L886.9,490.7 L886.8,490.7 L882.8,490.3 L882.7,490.2 L878.7,489.8 L878.6,489.8 L874.6,489.4 L874.5,489.4 L870.5,489.1 L870.5,489.1 L866.5,488.7 L866.4,488.7 L862.4,488.3 L862.3,488.3 L858.3,488.0 L858.2,488.0 L854.2,487.6 L854.2,487.6 L850.2,487.3 L850.1,487.3 L846.1,487.0 L846.0,487.0 L842.0,486.7 L841.9,486.7 L837.9,486.4 L837.9,486.4 L833.9,486.1 L833.8,486.1 L829.8,485.8 L829.7,485.8 L825.7,485.6 L825.6,485.6 L821.6,485.3 L821.6,485.3 L817.6,485.1 L817.5,485.1 L813.5,484.8 L813.4,484.8 L809.4,484.6 L809.3,484.6 L805.3,484.4 L805.3,484.4 L801.3,484.2 L801.2,484.2 L797.2,484.0 L797.1,484.0 L793.1,483.9 L793.0,483.9 L789.0,483.7 L788.9,483.7 L785.0,483.5 L784.9,483.5 L780.9,483.4 L780.8,483.4 L776.8,483.3 L776.7,483.3 L772.7,483.2 L772.6,483.2 L768.6,483.0 L768.6,483.0 L764.6,482.9 L764.5,482.9 L760.5,482.9 L760.4,482.9 L756.4,482.8 L756.3,482.8 L752.3,482.7 L752.3,482.7 L748.3,482.7 L748.2,482.7 L744.2,482.6 L744.1,482.6 L740.1,482.6 L740.0,482.6 L736.0,482.6 L736.0,482.6 L732.0,482.5 L731.9,482.5 L727.9,482.5 L727.8,482.5 L723.8,482.6 L723.7,482.6 L719.7,482.6 L719.7,482.6 L715.7,482.6 L715.6,482.6 L711.6,482.6 L711.5,482.6 L707.5,482.7 L707.4,482.7 L703.4,482.8 L703.4,482.8 L699.4,482.8 L699.3,482.8 L695.3,482.9 L695.2,482.9 L691.2,483.0 L691.1,483.0 L687.1,483.1 L687.1,483.1 L683.1,483.2 L683.0,483.2 L679.0,483.3 L678.9,483.4 L674.9,483.5 L674.8,483.5 L670.8,483.6 L670.8,483.6 L666.8,483.8 L666.7,483.8 L662.7,484.0 L662.6,484.0 L658.6,484.1 L658.5,484.1 L654.5,484.3 L654.4,484.3 L650.4,484.5 L650.4,484.5 L646.4,484.7 L646.3,484.7 L642.3,484.9 L642.2,484.9 L638.2,485.2 L638.1,485.2 L634.1,485.4 L634.1,485.4 L630.1,485.7 L630.0,485.7 L626.0,485.9 L625.9,485.9 L621.9,486.2 L621.8,486.2 L617.8,486.5 L617.8,486.5 L613.8,486.8 L613.7,486.8 L609.7,487.1 L609.6,487.1 L605.6,487.4 L605.5,487.4 L601.5,487.7 L601.5,487.7 L597.5,488.0 L597.4,488.0 L593.4,488.4 L593.3,488.4 L589.3,488.7 L589.2,488.7 L585.2,489.1 L585.2,489.1 L581.2,489.4 L581.1,489.5 L577.1,489.8 L577.0,489.8 L573.0,490.2 L572.9,490.2 L568.9,490.6 L568.9,490.6 L564.9,491.0 L564.8,491.0 L560.8,491.5 L560.7,491.5 L556.7,491.9 L556.6,491.9 L552.6,492.3 L552.6,492.3 L548.5,492.8 L548.5,492.8 L544.5,493.2 L544.4,493.3 L540.4,493.7 L540.3,493.7 L536.3,494.2 L536.2,494.2 L532.2,494.7 L532.2,494.7 L528.2,495.2 L528.1,495.2 L524.1,495.7 L524.0,495.7 L520.0,496.2 L519.9,496.2 L515.9,496.8 L515.9,496.8 L511.9,497.3 L511.8,497.3 L507.8,497.9 L507.7,497.9 L503.7,498.4 L503.6,498.4 L499.6,499.0 L499.6,499.0 L495.6,499.6 L495.5,499.6 L491.5,500.2 L491.4,500.2 L487.4,500.8 L487.3,500.8 L483.3,501.4 L483.3,501.4 L479.3,502.0 L479.2,502.0 L475.2,502.7 L475.1,502.7 L471.1,503.3 L471.0,503.3 L467.0,504.0 L467.0,504.0 L463.0,504.6 L462.9,504.6 L458.9,505.3 L458.8,505.3 L454.8,506.0 L454.7,506.0 L450.7,506.7 L450.7,506.7 L446.7,507.4 L446.6,507.4 L442.6,508.1 L442.5,508.1 L438.5,508.8 L438.4,508.8 L434.4,509.5 L434.4,509.5 L430.3,510.3 L430.3,510.3 L426.3,511.0 L426.2,511.0 L422.2,511.8 L422.1,511.8 L418.1,512.6 L418.1,512.6 L414.0,513.3 L414.0,513.4 L410.0,514.1 L409.9,514.2 L405.9,514.9 L405.8,515.0 L401.8,515.8 L401.7,515.8 L397.7,516.6 L397.7,516.6 L393.7,517.4 L393.6,517.4 L389.6,518.2 L389.5,518.3 L385.5,519.1 L385.4,519.1 L381.4,520.0 L381.4,520.0 L377.4,520.8 L377.3,520.8 L373.3,521.7 L373.2,521.7 L369.2,522.6 L369.1,522.6 L365.1,523.5 L365.1,523.5 L361.1,524.4 L361.0,524.4 L357.0,525.3 L356.9,525.4 L352.9,526.3 L352.8,526.3 L348.8,527.2 L348.8,527.2 L344.8,528.2 L344.7,528.2 L340.7,529.1 L340.6,529.1 L336.6,530.1 L336.5,530.1 L332.5,531.1 L332.5,531.1 L328.5,532.1 L328.4,532.1 L324.4,533.1 L324.3,533.1 L320.3,534.1 L320.2,534.1 L316.2,535.1 L316.2,535.1 L312.1,536.1 L312.1,536.1 L308.1,537.2 L308.0,537.2 L304.0,538.2 L303.9,538.2 L299.9,539.3 L299.9,539.3 L295.8,540.3 L295.8,540.3 L291.8,541.4 L291.7,541.4 L287.7,542.5 L287.6,542.5 L283.6,543.6 L283.6,543.6 L279.5,544.7 L279.5,544.7 L275.5,545.8 L275.4,545.8 L271.4,547.0 L271.3,547.0 L267.3,548.1 L267.2,548.1 L263.2,549.2 L263.2,549.3 L259.2,550.4 L259.1,550.4 L255.1,551.6 L255.0,551.6 L251.0,552.7 L250.9,552.8 L246.9,553.9 L246.9,553.9 L242.9,555.1 L242.8,555.1 L238.8,556.3 L238.7,556.4 L234.7,557.5 L234.6,557.6 L230.6,558.8 L230.6,558.8 L226.6,560.0 L226.5,560.0 L222.5,561.3 L222.4,561.3 L218.4,562.5 L218.3,562.5 L214.3,563.8 L214.3,563.8 L210.2,565.1 L210.2,565.1 L206.2,566.3 L206.1,566.4 L202.1,567.6 L202.0,567.7 L198.0,569.0 L198.0,569.0 L197.4,569.2 L191.0,574.4 L183.7,573.6 L181.7,574.3 L181.7,574.3 L177.6,575.6 L177.6,575.7 L173.6,577.0 L173.5,577.0 L169.5,578.4 L169.4,578.4 L165.4,579.8 L165.4,579.8 L161.3,581.2 L161.3,581.2 L157.3,582.6 L157.2,582.6 L153.2,584.0 L153.1,584.0 L149.1,585.4 L149.0,585.4 L145.0,586.8 L145.0,586.9 L141.0,588.3 L140.9,588.3 L136.9,589.8 L136.8,589.8 L132.8,591.2 L132.7,591.2 L128.9,592.6 L127.0,593.4 L125.2,594.2Z" fill="#03adfd"/><path d="M199.0,568.64 L204.4,566.91 L209.8,565.20 L215.2,563.50 L220.6,561.83 L226.0,560.17 L231.4,558.53 L236.8,556.91 L242.3,555.30 L247.7,553.71 L253.1,552.14 L258.5,550.59 L263.9,549.05 L269.3,547.53 L274.7,546.03 L280.1,544.55 L285.5,543.08 L290.9,541.64 L296.3,540.20 L301.7,538.79 L307.1,537.39 L312.5,536.01 L318.0,534.65 L323.4,533.31 L328.8,531.98 L334.2,530.67 L339.6,529.38 L345.0,528.10 L350.4,526.85 L355.8,525.61 L361.2,524.38 L366.6,523.18 L372.0,521.99 L377.4,520.82 L382.8,519.66 L388.2,518.53 L393.7,517.41 L399.1,516.31 L404.5,515.22 L409.9,514.16 L415.3,513.11 L420.7,512.08 L426.1,511.06 L431.5,510.07 L436.9,509.09 L442.3,508.13 L447.7,507.18 L453.1,506.25 L458.5,505.35 L463.9,504.45 L469.4,503.58 L474.8,502.72 L480.2,501.88 L485.6,501.06 L491.0,500.26 L496.4,499.47 L501.8,498.70 L507.2,497.95 L512.6,497.21 L518.0,496.50 L523.4,495.80 L528.8,495.12 L534.2,494.46 L539.6,493.81 L545.1,493.18 L550.5,492.57 L555.9,491.98 L561.3,491.40 L566.7,490.85 L572.1,490.31 L577.5,489.79 L582.9,489.28 L588.3,488.80 L593.7,488.33 L599.1,487.88 L604.5,487.45 L609.9,487.04 L615.3,486.64 L620.7,486.26 L626.2,485.90 L631.6,485.56 L637.0,485.24 L642.4,484.93 L647.8,484.65 L653.2,484.38 L658.6,484.13 L664.0,483.90 L669.4,483.68 L674.8,483.49 L680.2,483.31 L685.6,483.15 L691.0,483.01 L696.4,482.89 L701.9,482.79 L707.3,482.70 L712.7,482.63 L718.1,482.59 L723.5,482.56 L728.9,482.55 L734.3,482.56 L739.7,482.58 L745.1,482.63 L750.5,482.69 L755.9,482.78 L761.3,482.88 L766.7,483.00 L772.1,483.14 L777.6,483.30 L783.0,483.48 L788.4,483.68 L793.8,483.89 L799.2,484.13 L804.6,484.38 L810.0,484.66 L815.4,484.95 L820.8,485.27 L826.2,485.60 L831.6,485.95 L837.0,486.32 L842.4,486.71 L847.8,487.12 L853.3,487.55 L858.7,488.00 L864.1,488.47 L869.5,488.96 L874.9,489.47 L880.3,490.00 L885.7,490.55 L891.1,491.12 L896.5,491.71 L901.9,492.32 L907.3,492.95 L912.7,493.60 L918.1,494.27 L923.5,494.96 L928.9,495.67 L934.4,496.41 L939.8,497.16 L945.2,497.93 L950.6,498.72 L956.0,499.54 L961.4,500.37 L966.8,501.23 L972.2,502.11 L977.6,503.00 L983.0,503.92 L988.4,504.86 L993.8,505.82 L999.2,506.80 L1004.6,507.81 L1010.1,508.83 L1015.5,509.88 L1020.9,510.94 L1026.3,512.03 L1031.7,513.14 L1037.1,514.28 L1042.5,515.43 L1047.9,516.60 L1053.3,517.80 L1058.7,519.02 L1064.1,520.26 L1069.5,521.53 L1074.9,522.81 L1080.3,524.12 L1085.8,525.45 L1091.2,526.80 L1096.6,528.18 L1102.0,529.57 L1107.4,530.99 L1112.8,532.43 L1118.2,533.90 L1123.6,535.39 L1129.0,536.90 L1134.4,538.43 L1139.8,539.99 L1145.2,541.57 L1150.6,543.17 L1156.0,544.80 L1161.5,546.45 L1166.9,548.12 L1172.3,549.81 L1177.7,551.53 L1183.1,553.28 L1188.5,555.04 L1193.9,556.84 L1199.3,558.65 L1204.7,560.49 L1210.1,562.35 L1215.5,564.24 L1220.9,566.15 L1226.3,568.09 L1231.7,570.05 L1237.2,572.03 L1242.6,574.04 L1248.0,576.07 L1253.4,578.13 L1258.8,580.21 L1264.2,582.32 L1269.6,584.46 L1275.0,586.61" fill="none" stroke="#24506a" stroke-width="0.8" opacity="0.45"/></g></svg>
<div class="a" style="left:1388px;top:87px;width:16px;height:927px;background:#4a4a4a;"></div>
<svg style="left:1393px;top:93px" width="8" height="5" viewBox="0 0 8 5" ><path d="M0.5,4.5 L4,1 L7.5,4.5" fill="none" stroke="#8a8a8a"/></svg>
<svg style="left:1392px;top:1002px" width="8" height="5" viewBox="0 0 8 5" ><path d="M0.5,0.5 L4,4 L7.5,0.5" fill="none" stroke="#8a8a8a"/></svg>
<div class="a" style="left:1390px;top:356px;width:12px;height:348px;background:#6b6b6b;"></div>
<div class="a" style="left:41px;top:1014px;width:1363px;height:16px;background:#4a4a4a;"></div>
<div class="a" style="left:41px;top:1014px;width:48px;height:16px;background:#434343;"></div>
<div class="a" style="left:89px;top:1014px;width:183px;height:16px;background:#4e4e4e;"></div>
<div class="t" style="left:54.7px;top:1018px;font-size:9.8px;color:#e0e0e0;font-weight:normal;">90%</div>
<div class="t" style="left:113.5px;top:1018px;font-size:9.8px;color:#e0e0e0;font-weight:normal;">11.75 in x 6.608 in (120 ppi)</div>
<svg style="left:263px;top:1018px" width="5" height="9" viewBox="0 0 5 9" ><path d="M0.5,0.5 L4,4.5 L0.5,8.5" fill="none" stroke="#b0b0b0"/></svg>
<svg style="left:281px;top:1019px" width="5" height="8" viewBox="0 0 5 8" ><path d="M4.5,0.5 L1,4 L4.5,7.5" fill="none" stroke="#8a8a8a"/></svg>
<svg style="left:1376px;top:1019px" width="5" height="8" viewBox="0 0 5 8" ><path d="M0.5,0.5 L4,4 L0.5,7.5" fill="none" stroke="#8a8a8a"/></svg>
<div class="a" style="left:641px;top:1016px;width:386px;height:12px;background:#6b6b6b;"></div>
<div class="a" style="left:1404px;top:57px;width:3px;height:973px;background:#3b3b3b;"></div>
<div class="a" style="left:1405px;top:57px;width:1px;height:973px;background:#474747;"></div>
<div class="a" style="left:1407px;top:57px;width:511px;height:12px;background:#434343;"></div>
<svg style="left:1431px;top:61px" width="8" height="7" viewBox="0 0 8 7" ><path d="M3.5,0.5 L0.75,3.5 L3.5,6.5 M7.5,0.5 L4.75,3.5 L7.5,6.5" fill="none" stroke="#e0e0e0" stroke-width="1.4"/></svg>
<div class="a" style="left:1444px;top:69px;width:3px;height:961px;background:#3b3b3b;"></div>
<div class="a" style="left:1445px;top:69px;width:1px;height:961px;background:#474747;"></div>
<div class="a" style="left:1407px;top:69px;width:37px;height:961px;background:#535353;"></div>
<div class="a" style="left:1407px;top:137px;width:37px;height:1px;background:#3d3d3d;"></div>
<div class="a" style="left:1416px;top:74px;width:1px;height:4px;background:#3e3e3e;"></div>
<div class="a" style="left:1418px;top:74px;width:1px;height:4px;background:#3e3e3e;"></div>
<div class="a" style="left:1420px;top:74px;width:1px;height:4px;background:#3e3e3e;"></div>
<div class="a" style="left:1422px;top:74px;width:1px;height:4px;background:#3e3e3e;"></div>
<div class="a" style="left:1424px;top:74px;width:1px;height:4px;background:#3e3e3e;"></div>
<div class="a" style="left:1426px;top:74px;width:1px;height:4px;background:#3e3e3e;"></div>
<div class="a" style="left:1428px;top:74px;width:1px;height:4px;background:#3e3e3e;"></div>
<div class="a" style="left:1430px;top:74px;width:1px;height:4px;background:#3e3e3e;"></div>
<div class="a" style="left:1432px;top:74px;width:1px;height:4px;background:#3e3e3e;"></div>
<div class="a" style="left:1434px;top:74px;width:1px;height:4px;background:#3e3e3e;"></div>
<div class="a" style="left:1407px;top:178px;width:37px;height:1px;background:#3d3d3d;"></div>
<div class="a" style="left:1416px;top:142px;width:1px;height:4px;background:#3e3e3e;"></div>
<div class="a" style="left:1418px;top:142px;width:1px;height:4px;background:#3e3e3e;"></div>
<div class="a" style="left:1420px;top:142px;width:1px;height:4px;background:#3e3e3e;"></div>
<div class="a" style="left:1422px;top:142px;width:1px;height:4px;background:#3e3e3e;"></div>
<div class="a" style="left:1424px;top:142px;width:1px;height:4px;background:#3e3e3e;"></div>
<div class="a" style="left:1426px;top:142px;width:1px;height:4px;background:#3e3e3e;"></div>
<div class="a" style="left:1428px;top:142px;width:1px;height:4px;background:#3e3e3e;"></div>
<div class="a" style="left:1430px;top:142px;width:1px;height:4px;background:#3e3e3e;"></div>
<div class="a" style="left:1432px;top:142px;width:1px;height:4px;background:#3e3e3e;"></div>
<div class="a" style="left:1434px;top:142px;width:1px;height:4px;background:#3e3e3e;"></div>
<div class="a" style="left:1407px;top:219px;width:37px;height:1px;background:#3d3d3d;"></div>
<div class="a" style="left:1416px;top:183px;width:1px;height:4px;background:#3e3e3e;"></div>
<div class="a" style="left:1418px;top:183px;width:1px;height:4px;background:#3e3e3e;"></div>
<div class="a" style="left:1420px;top:183px;width:1px;height:4px;background:#3e3e3e;"></div>
<div class="a" style="left:1422px;top:183px;width:1px;height:4px;background:#3e3e3e;"></div>
<div class="a" style="left:1424px;top:183px;width:1px;height:4px;background:#3e3e3e;"></div>
<div class="a" style="left:1426px;top:183px;width:1px;height:4px;background:#3e3e3e;"></div>
<div class="a" style="left:1428px;top:183px;width:1px;height:4px;background:#3e3e3e;"></div>
<div class="a" style="left:1430px;top:183px;width:1px;height:4px;background:#3e3e3e;"></div>
<div class="a" style="left:1432px;top:183px;width:1px;height:4px;background:#3e3e3e;"></div>
<div class="a" style="left:1434px;top:183px;width:1px;height:4px;background:#3e3e3e;"></div>
<div class="a" style="left:1407px;top:288px;width:37px;height:1px;background:#3d3d3d;"></div>
<div class="a" style="left:1416px;top:224px;width:1px;height:4px;background:#3e3e3e;"></div>
<div class="a" style="left:1418px;top:224px;width:1px;height:4px;background:#3e3e3e;"></div>
<div class="a" style="left:1420px;top:224px;width:1px;height:4px;background:#3e3e3e;"></div>
<div class="a" style="left:1422px;top:224px;width:1px;height:4px;background:#3e3e3e;"></div>
<div class="a" style="left:1424px;top:224px;width:1px;height:4px;background:#3e3e3e;"></div>
<div class="a" style="left:1426px;top:224px;width:1px;height:4px;background:#3e3e3e;"></div>
<div class="a" style="left:1428px;top:224px;width:1px;height:4px;background:#3e3e3e;"></div>
<div class="a" style="left:1430px;top:224px;width:1px;height:4px;background:#3e3e3e;"></div>
<div class="a" style="left:1432px;top:224px;width:1px;height:4px;background:#3e3e3e;"></div>
<div class="a" style="left:1434px;top:224px;width:1px;height:4px;background:#3e3e3e;"></div>
<div class="a" style="left:1407px;top:330px;width:37px;height:1px;background:#3d3d3d;"></div>
<div class="a" style="left:1416px;top:293px;width:1px;height:4px;background:#3e3e3e;"></div>
<div class="a" style="left:1418px;top:293px;width:1px;height:4px;background:#3e3e3e;"></div>
<div class="a" style="left:1420px;top:293px;width:1px;height:4px;background:#3e3e3e;"></div>
<div class="a" style="left:1422px;top:293px;width:1px;height:4px;background:#3e3e3e;"></div>
<div class="a" style="left:1424px;top:293px;width:1px;height:4px;background:#3e3e3e;"></div>
<div class="a" style="left:1426px;top:293px;width:1px;height:4px;background:#3e3e3e;"></div>
<div class="a" style="left:1428px;top:293px;width:1px;height:4px;background:#3e3e3e;"></div>
<div class="a" style="left:1430px;top:293px;width:1px;height:4px;background:#3e3e3e;"></div>
<div class="a" style="left:1432px;top:293px;width:1px;height:4px;background:#3e3e3e;"></div>
<div class="a" style="left:1434px;top:293px;width:1px;height:4px;background:#3e3e3e;"></div>
<div class="a" style="left:1407px;top:399px;width:37px;height:1px;background:#3d3d3d;"></div>
<div class="a" style="left:1416px;top:335px;width:1px;height:4px;background:#3e3e3e;"></div>
<div class="a" style="left:1418px;top:335px;width:1px;height:4px;background:#3e3e3e;"></div>
<div class="a" style="left:1420px;top:335px;width:1px;height:4px;background:#3e3e3e;"></div>
<div class="a" style="left:1422px;top:335px;width:1px;height:4px;background:#3e3e3e;"></div>
<div class="a" style="left:1424px;top:335px;width:1px;height:4px;background:#3e3e3e;"></div>
<div class="a" style="left:1426px;top:335px;width:1px;height:4px;background:#3e3e3e;"></div>
<div class="a" style="left:1428px;top:335px;width:1px;height:4px;background:#3e3e3e;"></div>
<div class="a" style="left:1430px;top:335px;width:1px;height:4px;background:#3e3e3e;"></div>
<div class="a" style="left:1432px;top:335px;width:1px;height:4px;background:#3e3e3e;"></div>
<div class="a" style="left:1434px;top:335px;width:1px;height:4px;background:#3e3e3e;"></div>
<div class="a" style="left:1407px;top:468px;width:37px;height:1px;background:#3d3d3d;"></div>
<div class="a" style="left:1416px;top:404px;width:1px;height:4px;background:#3e3e3e;"></div>
<div class="a" style="left:1418px;top:404px;width:1px;height:4px;background:#3e3e3e;"></div>
<div class="a" style="left:1420px;top:404px;width:1px;height:4px;background:#3e3e3e;"></div>
<div class="a" style="left:1422px;top:404px;width:1px;height:4px;background:#3e3e3e;"></div>
<div class="a" style="left:1424px;top:404px;width:1px;height:4px;background:#3e3e3e;"></div>
<div class="a" style="left:1426px;top:404px;width:1px;height:4px;background:#3e3e3e;"></div>
<div class="a" style="left:1428px;top:404px;width:1px;height:4px;background:#3e3e3e;"></div>
<div class="a" style="left:1430px;top:404px;width:1px;height:4px;background:#3e3e3e;"></div>
<div class="a" style="left:1432px;top:404px;width:1px;height:4px;background:#3e3e3e;"></div>
<div class="a" style="left:1434px;top:404px;width:1px;height:4px;background:#3e3e3e;"></div>
<div class="a" style="left:1407px;top:509px;width:37px;height:1px;background:#3d3d3d;"></div>
<div class="a" style="left:1416px;top:473px;width:1px;height:4px;background:#3e3e3e;"></div>
<div class="a" style="left:1418px;top:473px;width:1px;height:4px;background:#3e3e3e;"></div>
<div class="a" style="left:1420px;top:473px;width:1px;height:4px;background:#3e3e3e;"></div>
<div class="a" style="left:1422px;top:473px;width:1px;height:4px;background:#3e3e3e;"></div>
<div class="a" style="left:1424px;top:473px;width:1px;height:4px;background:#3e3e3e;"></div>
<div class="a" style="left:1426px;top:473px;width:1px;height:4px;background:#3e3e3e;"></div>
<div class="a" style="left:1428px;top:473px;width:1px;height:4px;background:#3e3e3e;"></div>
<div class="a" style="left:1430px;top:473px;width:1px;height:4px;background:#3e3e3e;"></div>
<div class="a" style="left:1432px;top:473px;width:1px;height:4px;background:#3e3e3e;"></div>
<div class="a" style="left:1434px;top:473px;width:1px;height:4px;background:#3e3e3e;"></div>
<div class="a" style="left:1407px;top:550px;width:37px;height:1px;background:#3d3d3d;"></div>
<div class="a" style="left:1416px;top:514px;width:1px;height:4px;background:#3e3e3e;"></div>
<div class="a" style="left:1418px;top:514px;width:1px;height:4px;background:#3e3e3e;"></div>
<div class="a" style="left:1420px;top:514px;width:1px;height:4px;background:#3e3e3e;"></div>
<div class="a" style="left:1422px;top:514px;width:1px;height:4px;background:#3e3e3e;"></div>
<div class="a" style="left:1424px;top:514px;width:1px;height:4px;background:#3e3e3e;"></div>
<div class="a" style="left:1426px;top:514px;width:1px;height:4px;background:#3e3e3e;"></div>
<div class="a" style="left:1428px;top:514px;width:1px;height:4px;background:#3e3e3e;"></div>
<div class="a" style="left:1430px;top:514px;width:1px;height:4px;background:#3e3e3e;"></div>
<div class="a" style="left:1432px;top:514px;width:1px;height:4px;background:#3e3e3e;"></div>
<div class="a" style="left:1434px;top:514px;width:1px;height:4px;background:#3e3e3e;"></div>
<div class="a" style="left:1407px;top:591px;width:37px;height:1px;background:#3d3d3d;"></div>
<div class="a" style="left:1416px;top:555px;width:1px;height:4px;background:#3e3e3e;"></div>
<div class="a" style="left:1418px;top:555px;width:1px;height:4px;background:#3e3e3e;"></div>
<div class="a" style="left:1420px;top:555px;width:1px;height:4px;background:#3e3e3e;"></div>
<div class="a" style="left:1422px;top:555px;width:1px;height:4px;background:#3e3e3e;"></div>
<div class="a" style="left:1424px;top:555px;width:1px;height:4px;background:#3e3e3e;"></div>
<div class="a" style="left:1426px;top:555px;width:1px;height:4px;background:#3e3e3e;"></div>
<div class="a" style="left:1428px;top:555px;width:1px;height:4px;background:#3e3e3e;"></div>
<div class="a" style="left:1430px;top:555px;width:1px;height:4px;background:#3e3e3e;"></div>
<div class="a" style="left:1432px;top:555px;width:1px;height:4px;background:#3e3e3e;"></div>
<div class="a" style="left:1434px;top:555px;width:1px;height:4px;background:#3e3e3e;"></div>
<div class="a" style="left:1407px;top:632px;width:37px;height:1px;background:#3d3d3d;"></div>
<div class="a" style="left:1416px;top:596px;width:1px;height:4px;background:#3e3e3e;"></div>
<div class="a" style="left:1418px;top:596px;width:1px;height:4px;background:#3e3e3e;"></div>
<div class="a" style="left:1420px;top:596px;width:1px;height:4px;background:#3e3e3e;"></div>
<div class="a" style="left:1422px;top:596px;width:1px;height:4px;background:#3e3e3e;"></div>
<div class="a" style="left:1424px;top:596px;width:1px;height:4px;background:#3e3e3e;"></div>
<div class="a" style="left:1426px;top:596px;width:1px;height:4px;background:#3e3e3e;"></div>
<div class="a" style="left:1428px;top:596px;width:1px;height:4px;background:#3e3e3e;"></div>
<div class="a" style="left:1430px;top:596px;width:1px;height:4px;background:#3e3e3e;"></div>
<div class="a" style="left:1432px;top:596px;width:1px;height:4px;background:#3e3e3e;"></div>
<div class="a" style="left:1434px;top:596px;width:1px;height:4px;background:#3e3e3e;"></div>
<div class="a" style="left:1447px;top:57px;width:471px;height:12px;background:#434343;"></div>
<svg style="left:1904px;top:61px" width="8" height="7" viewBox="0 0 8 7" ><path d="M0.5,0.5 L3.25,3.5 L0.5,6.5 M4.5,0.5 L7.25,3.5 L4.5,6.5" fill="none" stroke="#e0e0e0" stroke-width="1.4"/></svg>
<div class="a" style="left:1447px;top:69px;width:471px;height:1px;background:#3d3d3d;"></div>
<div class="a" style="left:1447px;top:70px;width:471px;height:27px;background:#434343;"></div>
<div class="a" style="left:1447px;top:70px;width:64px;height:27px;background:#535353;"></div>
<div class="t" style="left:1456px;top:77.5px;font-size:10px;color:#f0f0f0;font-weight:bold;">Navigator</div>
<div class="a" style="left:1902px;top:80px;width:10px;height:1px;background:#c8c8c8;"></div>
<div class="a" style="left:1902px;top:82px;width:10px;height:1px;background:#c8c8c8;"></div>
<div class="a" style="left:1902px;top:84px;width:10px;height:1px;background:#c8c8c8;"></div>
<div class="a" style="left:1902px;top:86px;width:10px;height:1px;background:#c8c8c8;"></div>
<div class="a" style="left:1447px;top:97px;width:471px;height:202px;background:#535353;"></div>
<div class="a" style="left:1512px;top:103px;width:338px;height:190px;background:#e63c3c;"></div>
<div class="a" style="left:1514px;top:105px;width:334px;height:186px;background:#ffffff;"></div>
<svg style="left:1514px;top:105px" width="334" height="186" viewBox="76 255 1269 707" preserveAspectRatio="none"><use href="#cupnav"/></svg>
<div class="a" style="left:1447px;top:298px;width:471px;height:1px;background:#3d3d3d;"></div>
<div class="a" style="left:1447px;top:299px;width:471px;height:24px;background:#535353;"></div>
<div class="a" style="left:1447px;top:299px;width:58px;height:24px;background:#474747;"></div>
<div class="t" style="left:1452px;top:306.8px;font-size:9.6px;color:#e0e0e0;font-weight:normal;">90%</div>
<svg style="left:1511px;top:307px" width="10" height="5" viewBox="0 0 10 5" ><path d="M0,5 L4,1 L5,2 L6,1 L10,5 Z" fill="#d0d0d0"/></svg>
<div class="a" style="left:1535px;top:307px;width:331px;height:3px;background:#6e6e6e;border-radius:1px"></div>
<svg style="left:1691px;top:308px" width="12" height="11" viewBox="0 0 12 11" ><path d="M6,0 L11,7 Q12,11 8,11 L4,11 Q0,11 1,7 Z" fill="#e8e8e8"/></svg>
<svg style="left:1876px;top:306px" width="17" height="8" viewBox="0 0 17 8" ><path d="M0,8 L6,1 L8,3 L10,0 L17,8 Z" fill="#d0d0d0"/></svg>
<div class="a" style="left:1447px;top:323px;width:471px;height:31px;background:#434343;"></div>
<div class="a" style="left:1447px;top:323px;width:471px;height:3px;background:#3d3d3d;"></div>
<div class="a" style="left:1447px;top:326px;width:47px;height:28px;background:#535353;"></div>
<div class="a" style="left:1553px;top:326px;width:1px;height:28px;background:#3d3d3d;"></div>
<div class="a" style="left:1597px;top:326px;width:1px;height:28px;background:#3d3d3d;"></div>
<div class="t" style="left:1456px;top:333.9px;font-size:9.6px;color:#f0f0f0;font-weight:bold;letter-spacing:-0.2px">Layers</div>
<div class="t" style="left:1503px;top:333.9px;font-size:9.6px;color:#a8a8a8;font-weight:bold;letter-spacing:-0.2px">Channels</div>
<div class="t" style="left:1563px;top:333.9px;font-size:9.6px;color:#a8a8a8;font-weight:bold;letter-spacing:-0.2px">Paths</div>
<div class="a" style="left:1903px;top:336px;width:10px;height:1px;background:#c8c8c8;"></div>
<div class="a" style="left:1903px;top:338px;width:10px;height:1px;background:#c8c8c8;"></div>
<div class="a" style="left:1903px;top:340px;width:10px;height:1px;background:#c8c8c8;"></div>
<div class="a" style="left:1903px;top:342px;width:10px;height:1px;background:#c8c8c8;"></div>
<div class="a" style="left:1447px;top:354px;width:471px;height:676px;background:#535353;"></div>
<div class="a" style="left:1451px;top:362px;width:87px;height:21px;background:#434343;border:1px solid #5c5c5c;border-radius:3px"></div>
<svg style="left:1459px;top:367px" width="11" height="11" viewBox="0 0 11 11" ><circle cx="4.5" cy="4.5" r="3.6" fill="none" stroke="#e8e8e8" stroke-width="1.5"/><path d="M7,7 L10,10" stroke="#e8e8e8" stroke-width="1.8"/></svg>
<div class="t" style="left:1472.5px;top:367.5px;font-size:10px;color:#e8e8e8;font-weight:normal;">Kind</div>
<svg style="left:1527px;top:370px" width="8" height="5" viewBox="0 0 8 5" ><path d="M0.5,0.5 L4,4 L7.5,0.5" fill="none" stroke="#c8c8c8"/></svg>
<svg style="left:1549px;top:367px" width="13" height="11" viewBox="0 0 13 11" ><rect x="0.5" y="0.5" width="12" height="10" fill="none" stroke="#d8d8d8"/><path d="M2,9 L5,5 L7,7 L8,6 L11,9 Z" fill="#d8d8d8"/></svg>
<svg style="left:1574px;top:366px" width="12" height="12" viewBox="0 0 12 12" ><circle cx="6" cy="6" r="5.2" fill="none" stroke="#d8d8d8" stroke-width="1.4"/><path d="M10,2 L2,10 A5.5,5.5 0 0 0 10,2 Z" fill="#d8d8d8"/></svg>
<svg style="left:1598px;top:366px" width="12" height="12" viewBox="0 0 12 12" ><path d="M0,0 L12,0 L12,3 L11,3 L10,1.5 L7,1.5 L7,10.5 L9,10.5 L9,12 L3,12 L3,10.5 L5,10.5 L5,1.5 L2,1.5 L1,3 L0,3 Z" fill="#d8d8d8"/></svg>
<svg style="left:1622px;top:366px" width="12" height="12" viewBox="0 0 12 12" ><rect x="1.5" y="1.5" width="9" height="9" fill="none" stroke="#d8d8d8" stroke-width="1.1"/><rect x="0.5" y="0.5" width="2.6" height="2.6" fill="#535353" stroke="#d8d8d8" stroke-width="1"/><rect x="8.9" y="0.5" width="2.6" height="2.6" fill="#535353" stroke="#d8d8d8" stroke-width="1"/><rect x="0.5" y="8.9" width="2.6" height="2.6" fill="#535353" stroke="#d8d8d8" stroke-width="1"/><rect x="8.9" y="8.9" width="2.6" height="2.6" fill="#535353" stroke="#d8d8d8" stroke-width="1"/></svg>
<svg style="left:1646px;top:366px" width="12" height="13" viewBox="0 0 12 13" ><path d="M4.5,0.75 L8.5,0.75 L11.25,3.5 L11.25,10.5 L4.5,10.5 Z" fill="none" stroke="#d8d8d8" stroke-width="1.4"/><path d="M8.5,0.75 L8.5,3.5 L11.25,3.5" fill="none" stroke="#d8d8d8" stroke-width="1"/><rect x="0" y="6.5" width="6" height="6.5" fill="#d8d8d8"/></svg>
<div class="a" style="left:1669px;top:363px;width:10px;height:18px;border:1px solid #3a3a3a;border-radius:5px;background:#474747"></div>
<div class="a" style="left:1670px;top:363px;width:8px;height:8px;border-radius:50%;background:#e8e8e8"></div>
<div class="a" style="left:1447px;top:385px;width:471px;height:1px;background:#444444;"></div>
<div class="a" style="left:1451px;top:391px;width:128px;height:19px;background:#4d4d4d;border:1px solid #595959;border-radius:3px"></div>
<div class="t" style="left:1459px;top:395.7px;font-size:10px;color:#8a8a8a;font-weight:normal;letter-spacing:-0.1px">Normal</div>
<svg style="left:1570px;top:399px" width="8" height="5" viewBox="0 0 8 5" ><path d="M0.5,0.5 L4,4 L7.5,0.5" fill="none" stroke="#6a6a6a"/></svg>
<div class="t" style="left:1586px;top:395.7px;font-size:10px;color:#8a8a8a;font-weight:normal;letter-spacing:-0.2px">Opacity:</div>
<div class="a" style="left:1627px;top:391px;width:51px;height:17px;background:#4d4d4d;border:1px solid #595959;border-radius:3px"></div>
<div class="a" style="left:1629px;top:393px;width:33px;height:13px;background:#474747;"></div>
<div class="a" style="left:1662px;top:392px;width:1px;height:15px;background:#595959;"></div>
<div class="t" style="left:1632.5px;top:395.7px;font-size:10px;color:#7e7e7e;font-weight:normal;letter-spacing:-0.2px">100%</div>
<svg style="left:1666px;top:398px" width="8" height="5" viewBox="0 0 8 5" ><path d="M0.5,0.5 L4,4 L7.5,0.5" fill="none" stroke="#6a6a6a"/></svg>
<div class="a" style="left:1447px;top:413px;width:471px;height:1px;background:#444444;"></div>
<div class="t" style="left:1453px;top:423.5px;font-size:10px;color:#8a8a8a;font-weight:normal;letter-spacing:-0.2px">Lock:</div>
<svg style="left:1486px;top:422px" width="12" height="12" viewBox="0 0 12 12" ><rect x="0.5" y="0.5" width="11" height="11" fill="none" stroke="#8e8e8e"/><rect x="1.5" y="1.5" width="3" height="3" fill="#8e8e8e"/><rect x="7.5" y="1.5" width="3" height="3" fill="#8e8e8e"/><rect x="4.5" y="4.5" width="3" height="3" fill="#8e8e8e"/><rect x="1.5" y="7.5" width="3" height="3" fill="#8e8e8e"/><rect x="7.5" y="7.5" width="3" height="3" fill="#8e8e8e"/></svg>
<svg style="left:1507px;top:421px" width="14" height="14" viewBox="0 0 14 14" ><path d="M13,0.5 L6,8 L8,10 Z" fill="#8e8e8e"/><path d="M5,9 C2,9 2,12 0,13.5 C4,14 7,12 7,11 Z" fill="#8e8e8e"/></svg>
<svg style="left:1529.0px;top:421.5px" width="13" height="13" viewBox="0 0 13 13" ><path d="M6.5,2 L6.5,11 M2,6.5 L11,6.5" stroke="#8e8e8e" stroke-width="1.8"/><path d="M6.5,0 L9.7,3.2 L3.3,3.2 Z M6.5,13 L9.7,9.8 L3.3,9.8 Z M0,6.5 L3.2,3.3 L3.2,9.7 Z M13,6.5 L9.8,3.3 L9.8,9.7 Z" fill="#8e8e8e"/></svg>
<svg style="left:1551px;top:421px" width="15" height="15" viewBox="0 0 15 15" ><path d="M3,1 L3,12 L14,12 M0,4 L9,4 L12,7 L12,15" fill="none" stroke="#8e8e8e" stroke-width="1.2"/><path d="M12,1 L13.5,2.5" stroke="#8e8e8e"/></svg>
<svg style="left:1575px;top:421px" width="11" height="14" viewBox="0 0 11 14" ><path d="M2.5,6 L2.5,4 A3,3 0 0 1 8.5,4 L8.5,6" fill="none" stroke="#8e8e8e" stroke-width="1.6"/><rect x="0" y="6" width="11" height="8" rx="1" fill="#8e8e8e"/><circle cx="5.5" cy="10" r="1.2" fill="#535353"/></svg>
<div class="t" style="left:1608px;top:423.5px;font-size:10px;color:#8a8a8a;font-weight:normal;">Fill:</div>
<div class="a" style="left:1627px;top:419px;width:51px;height:17px;background:#4d4d4d;border:1px solid #595959;border-radius:3px"></div>
<div class="a" style="left:1629px;top:421px;width:33px;height:13px;background:#474747;"></div>
<div class="a" style="left:1662px;top:420px;width:1px;height:15px;background:#595959;"></div>
<div class="t" style="left:1632.5px;top:423.7px;font-size:10px;color:#7e7e7e;font-weight:normal;letter-spacing:-0.2px">100%</div>
<svg style="left:1666px;top:426px" width="8" height="5" viewBox="0 0 8 5" ><path d="M0.5,0.5 L4,4 L7.5,0.5" fill="none" stroke="#6a6a6a"/></svg>
<div class="a" style="left:1447px;top:442px;width:471px;height:562px;background:#4e4e4e;"></div>
<div class="a" style="left:1447px;top:442px;width:454px;height:140px;background:#535353;"></div>
<div class="a" style="left:1447px;top:470px;width:454px;height:1px;background:#444444;"></div>
<div class="a" style="left:1476px;top:443px;width:1px;height:27px;background:#444444;"></div>
<svg style="left:1455px;top:454px" width="14" height="9" viewBox="0 0 14 9" ><path d="M0.5,4.5 Q7,-2.5 13.5,4.5 Q7,11.5 0.5,4.5 Z" fill="#dcdcdc"/><circle cx="7" cy="4.5" r="2.6" fill="#3a3a3a"/><circle cx="7.8" cy="3.6" r="0.8" fill="#dcdcdc"/></svg>
<div class="t" style="left:1522px;top:453.8px;font-size:9.9px;color:#e8e8e8;font-weight:normal;">Shape</div>
<div class="a" style="left:1447px;top:498px;width:454px;height:1px;background:#444444;"></div>
<div class="a" style="left:1476px;top:471px;width:1px;height:27px;background:#444444;"></div>
<svg style="left:1455px;top:482px" width="14" height="9" viewBox="0 0 14 9" ><path d="M0.5,4.5 Q7,-2.5 13.5,4.5 Q7,11.5 0.5,4.5 Z" fill="#dcdcdc"/><circle cx="7" cy="4.5" r="2.6" fill="#3a3a3a"/><circle cx="7.8" cy="3.6" r="0.8" fill="#dcdcdc"/></svg>
<div class="t" style="left:1522px;top:481.8px;font-size:9.9px;color:#e8e8e8;font-weight:normal;">Cup</div>
<div class="a" style="left:1447px;top:526px;width:454px;height:1px;background:#444444;"></div>
<div class="a" style="left:1476px;top:499px;width:1px;height:27px;background:#444444;"></div>
<svg style="left:1455px;top:510px" width="14" height="9" viewBox="0 0 14 9" ><path d="M0.5,4.5 Q7,-2.5 13.5,4.5 Q7,11.5 0.5,4.5 Z" fill="#dcdcdc"/><circle cx="7" cy="4.5" r="2.6" fill="#3a3a3a"/><circle cx="7.8" cy="3.6" r="0.8" fill="#dcdcdc"/></svg>
<div class="t" style="left:1522px;top:509.8px;font-size:9.9px;color:#e8e8e8;font-weight:normal;">CutLines</div>
<div class="a" style="left:1447px;top:554px;width:454px;height:1px;background:#444444;"></div>
<div class="a" style="left:1476px;top:527px;width:1px;height:27px;background:#444444;"></div>
<svg style="left:1455px;top:538px" width="14" height="9" viewBox="0 0 14 9" ><path d="M0.5,4.5 Q7,-2.5 13.5,4.5 Q7,11.5 0.5,4.5 Z" fill="#dcdcdc"/><circle cx="7" cy="4.5" r="2.6" fill="#3a3a3a"/><circle cx="7.8" cy="3.6" r="0.8" fill="#dcdcdc"/></svg>
<div class="t" style="left:1522px;top:537.8px;font-size:9.9px;color:#e8e8e8;font-weight:normal;">Design</div>
<div class="a" style="left:1447px;top:583px;width:454px;height:1px;background:#444444;"></div>
<div class="a" style="left:1476px;top:555px;width:1px;height:27px;background:#444444;"></div>
<svg style="left:1455px;top:566px" width="14" height="9" viewBox="0 0 14 9" ><path d="M0.5,4.5 Q7,-2.5 13.5,4.5 Q7,11.5 0.5,4.5 Z" fill="#dcdcdc"/><circle cx="7" cy="4.5" r="2.6" fill="#3a3a3a"/><circle cx="7.8" cy="3.6" r="0.8" fill="#dcdcdc"/></svg>
<div class="t" style="left:1522px;top:565.8px;font-size:9.9px;color:#e8e8e8;font-weight:normal;">Background</div>
<svg style="left:1482px;top:448px" width="31" height="19" viewBox="0 0 31 19" ><rect x="-1" y="-1" width="33" height="21" fill="#2a2a2a"/><rect width="31" height="19" fill="#ffffff"/><rect x="0" y="0" width="5" height="5" fill="#cfcfcf"/><rect x="10" y="0" width="5" height="5" fill="#cfcfcf"/><rect x="20" y="0" width="5" height="5" fill="#cfcfcf"/><rect x="30" y="0" width="1" height="5" fill="#cfcfcf"/><rect x="5" y="5" width="5" height="5" fill="#cfcfcf"/><rect x="15" y="5" width="5" height="5" fill="#cfcfcf"/><rect x="25" y="5" width="5" height="5" fill="#cfcfcf"/><rect x="0" y="10" width="5" height="5" fill="#cfcfcf"/><rect x="10" y="10" width="5" height="5" fill="#cfcfcf"/><rect x="20" y="10" width="5" height="5" fill="#cfcfcf"/><rect x="30" y="10" width="1" height="5" fill="#cfcfcf"/><rect x="5" y="15" width="5" height="4" fill="#cfcfcf"/><rect x="15" y="15" width="5" height="4" fill="#cfcfcf"/><rect x="25" y="15" width="5" height="4" fill="#cfcfcf"/><path d="M2,10 Q10,6 16,8 L16,13 Q9,12 3,15 Z" fill="#03adfd"/><rect x="15" y="3" width="16" height="16" fill="#3a3a3a"/><rect x="18.5" y="6.5" width="9" height="9" fill="none" stroke="#e0e0e0"/><rect x="17" y="5" width="3" height="3" fill="#3a3a3a" stroke="#e0e0e0" stroke-width="0.8"/><rect x="26" y="5" width="3" height="3" fill="#3a3a3a" stroke="#e0e0e0" stroke-width="0.8"/><rect x="17" y="14" width="3" height="3" fill="#3a3a3a" stroke="#e0e0e0" stroke-width="0.8"/><rect x="26" y="14" width="3" height="3" fill="#3a3a3a" stroke="#e0e0e0" stroke-width="0.8"/></svg>
<svg style="left:1482px;top:476px" width="31" height="19" viewBox="0 0 31 19" ><rect x="-1" y="-1" width="33" height="21" fill="#2a2a2a"/><rect width="31" height="19" fill="#ffffff"/><rect x="0" y="0" width="5" height="5" fill="#cfcfcf"/><rect x="10" y="0" width="5" height="5" fill="#cfcfcf"/><rect x="20" y="0" width="5" height="5" fill="#cfcfcf"/><rect x="30" y="0" width="1" height="5" fill="#cfcfcf"/><rect x="5" y="5" width="5" height="5" fill="#cfcfcf"/><rect x="15" y="5" width="5" height="5" fill="#cfcfcf"/><rect x="25" y="5" width="5" height="5" fill="#cfcfcf"/><rect x="0" y="10" width="5" height="5" fill="#cfcfcf"/><rect x="10" y="10" width="5" height="5" fill="#cfcfcf"/><rect x="20" y="10" width="5" height="5" fill="#cfcfcf"/><rect x="30" y="10" width="1" height="5" fill="#cfcfcf"/><rect x="5" y="15" width="5" height="4" fill="#cfcfcf"/><rect x="15" y="15" width="5" height="4" fill="#cfcfcf"/><rect x="25" y="15" width="5" height="4" fill="#cfcfcf"/><defs><linearGradient id="tc" x1="0" x2="1"><stop offset="0" stop-color="#eee"/><stop offset="0.6" stop-color="#999"/><stop offset="1" stop-color="#ccc"/></linearGradient></defs><path d="M11,4 L20,4 L19,17 L13,17 Z" fill="url(#tc)"/></svg>
<svg style="left:1482px;top:504px" width="31" height="19" viewBox="0 0 31 19" ><rect x="-1" y="-1" width="33" height="21" fill="#2a2a2a"/><rect width="31" height="19" fill="#ffffff"/><rect x="0" y="0" width="5" height="5" fill="#cfcfcf"/><rect x="10" y="0" width="5" height="5" fill="#cfcfcf"/><rect x="20" y="0" width="5" height="5" fill="#cfcfcf"/><rect x="30" y="0" width="1" height="5" fill="#cfcfcf"/><rect x="5" y="5" width="5" height="5" fill="#cfcfcf"/><rect x="15" y="5" width="5" height="5" fill="#cfcfcf"/><rect x="25" y="5" width="5" height="5" fill="#cfcfcf"/><rect x="0" y="10" width="5" height="5" fill="#cfcfcf"/><rect x="10" y="10" width="5" height="5" fill="#cfcfcf"/><rect x="20" y="10" width="5" height="5" fill="#cfcfcf"/><rect x="30" y="10" width="1" height="5" fill="#cfcfcf"/><rect x="5" y="15" width="5" height="4" fill="#cfcfcf"/><rect x="15" y="15" width="5" height="4" fill="#cfcfcf"/><rect x="25" y="15" width="5" height="4" fill="#cfcfcf"/><rect x="0" y="0" width="31" height="19" fill="#fff" opacity="0.35"/></svg>
<svg style="left:1482px;top:532px" width="31" height="19" viewBox="0 0 31 19" ><rect x="-1" y="-1" width="33" height="21" fill="#2a2a2a"/><rect width="31" height="19" fill="#eeeeee"/><rect x="15" y="3" width="16" height="16" fill="#3a3a3a"/><path d="M20,6 L27,6 L27,16 L20,16 Z M22,8 L22,11 L25,11 L25,14" fill="none" stroke="#e0e0e0"/><rect x="18" y="11" width="5" height="6" fill="#e0e0e0"/></svg>
<svg style="left:1482px;top:560px" width="31" height="19" viewBox="0 0 31 19" ><rect x="-1" y="-1" width="33" height="21" fill="#2a2a2a"/><rect width="31" height="19" fill="#ffffff"/></svg>
<div class="a" style="left:1447px;top:1004px;width:471px;height:1px;background:#444444;"></div>
<svg style="left:1716px;top:1013px" width="15" height="8" viewBox="0 0 15 8" ><path d="M5,0.75 L3.5,0.75 A3.25,3.25 0 0 0 3.5,7.25 L5,7.25 M10,0.75 L11.5,0.75 A3.25,3.25 0 0 1 11.5,7.25 L10,7.25 M4.5,4 L10.5,4" fill="none" stroke="#8e8e8e" stroke-width="1.5"/></svg>
<div class="t" style="left:1744.5px;top:1010.5px;font-size:14px;color:#8e8e8e;font-weight:normal;letter-spacing:-0.5px"><i>fx</i></div>
<svg style="left:1770px;top:1012px" width="13" height="10" viewBox="0 0 13 10" ><rect width="13" height="10" fill="#8e8e8e"/><circle cx="6.5" cy="5" r="3" fill="#535353"/></svg>
<svg style="left:1798px;top:1011px" width="13" height="14" viewBox="0 0 13 14" ><circle cx="6" cy="6" r="5.2" fill="none" stroke="#e0e0e0" stroke-width="1.4"/><path d="M10,2 L2,10 A5.5,5.5 0 0 0 10,2 Z" fill="#e0e0e0"/><path d="M9,12 L13,12 L11,14 Z" fill="#e0e0e0"/></svg>
<svg style="left:1824px;top:1011px" width="14" height="12" viewBox="0 0 14 12" ><path d="M0,1 L5,1 L6,2.5 L14,2.5 L14,12 L0,12 Z" fill="#e0e0e0"/></svg>
<svg style="left:1852px;top:1011px" width="13" height="13" viewBox="0 0 13 13" ><rect x="0.5" y="0.5" width="12" height="12" fill="none" stroke="#e0e0e0"/><path d="M6.5,3 L6.5,10 M3,6.5 L10,6.5" stroke="#e0e0e0"/></svg>
<svg style="left:1879px;top:1011px" width="12" height="14" viewBox="0 0 12 14" ><path d="M0,2.5 L12,2.5 M4,2.5 L4,0.5 L8,0.5 L8,2.5 M1.5,3 L2.5,13.5 L9.5,13.5 L10.5,3 M4.5,5 L4.5,12 M7.5,5 L7.5,12" fill="none" stroke="#b8b8b8"/></svg>
<svg style="left:1419px;top:84px" width="16" height="17" viewBox="0 0 16 17" ><rect x="0.5" y="0.5" width="4.5" height="4.5" fill="none" stroke="#d8d8d8"/><rect x="0.5" y="6.5" width="4.5" height="4.5" fill="none" stroke="#d8d8d8"/><rect x="0" y="12" width="5.5" height="5" fill="#d8d8d8"/><path d="M9,5 C13,5 15,8 14,11 C13.5,13 12,14 11,15" fill="none" stroke="#d8d8d8" stroke-width="1.4"/><path d="M8,2 L11.5,0.5 L11,6 Z" fill="#d8d8d8"/></svg>
<svg style="left:1419px;top:114px" width="14" height="13" viewBox="0 0 14 13" ><path d="M1,0 L13,0 Q14,0 14,1 L14,8 Q14,9 13,9 L6,9 L3,12.5 L3,9 L1,9 Q0,9 0,8 L0,1 Q0,0 1,0 Z" fill="#d8d8d8"/></svg>
<svg style="left:1415px;top:152px" width="18" height="18" viewBox="0 0 18 18" ><path d="M4,5 A7,7 0 1 1 3.5,12.5" fill="none" stroke="#d8d8d8" stroke-width="1.5"/><path d="M0,8.5 L5.5,8.5 L3,4 Z" fill="#d8d8d8"/><path d="M10.5,4.5 L10.5,9.5 L13,12" fill="none" stroke="#d8d8d8" stroke-width="1.6"/></svg>
<svg style="left:1416px;top:194px" width="17" height="17" viewBox="0 0 17 17" ><circle cx="8.5" cy="8.5" r="7.7" fill="none" stroke="#d8d8d8" stroke-width="1.5"/><rect x="7.6" y="7" width="1.9" height="6" fill="#d8d8d8"/><circle cx="8.5" cy="4.6" r="1.1" fill="#d8d8d8"/></svg>
<svg style="left:1415px;top:235px" width="20" height="17" viewBox="0 0 20 17" ><rect x="0" y="0" width="2" height="2" fill="#d8d8d8"/><rect x="0" y="3.5" width="2" height="2" fill="#d8d8d8"/><rect x="0" y="7" width="2" height="2" fill="#d8d8d8"/><rect x="3" y="0.5" width="4" height="1" fill="#d8d8d8"/><rect x="3" y="4" width="4" height="1" fill="#d8d8d8"/><rect x="3" y="7.5" width="4" height="1" fill="#d8d8d8"/><path d="M19.5,2 L11,10 L12.5,11.5 Z" fill="#d8d8d8"/><path d="M10,10.5 C7,10.5 7,14 4,16.5 C9,17 12.5,15 12.5,12.5 Z" fill="#d8d8d8"/></svg>
<svg style="left:1415px;top:262px" width="20" height="17" viewBox="0 0 20 17" ><path d="M0,2.5 C2,0 6,0 8,2 L10,3 L10,3.5 L8,4 C6,6 2,5 0,2.5 Z" fill="#d8d8d8"/><rect x="9" y="2" width="11" height="1.8" fill="#d8d8d8"/><rect x="2" y="10" width="11" height="1.8" fill="#d8d8d8"/><path d="M12,11 L18,7 C20,9 20,14 18,16 Z" fill="#d8d8d8"/></svg>
<svg style="left:1417px;top:306px" width="18" height="14" viewBox="0 0 18 14" ><path d="M6,0 L12,10 L0,10 Z" fill="#d8d8d8"/><circle cx="11.5" cy="8.5" r="5" fill="#535353" stroke="#d8d8d8" stroke-width="1.4"/><path d="M6,0 L9.2,5.3 L6.7,8 L6.7,10 L0,10 Z" fill="#d8d8d8"/></svg>
<svg style="left:1418px;top:346px" width="16" height="16" viewBox="0 0 16 16" ><text x="0" y="14" font-family="Liberation Sans" font-size="17" fill="#d8d8d8">A</text><rect x="13.5" y="0" width="1.3" height="16" fill="#d8d8d8"/></svg>
<svg style="left:1420px;top:374px" width="12" height="15" viewBox="0 0 12 15" ><path d="M5,0 L12,0 L12,15 L10,15 L10,1.8 L8.6,1.8 L8.6,15 L6.6,15 L6.6,8 L5,8 A4,4 0 0 1 5,0 Z" fill="#d8d8d8"/></svg>
<svg style="left:1416px;top:414px" width="18" height="16" viewBox="0 0 18 16" ><rect x="0.5" y="7.5" width="5" height="5" fill="none" stroke="#d8d8d8"/><rect x="4" y="10.5" width="5" height="5" fill="#d8d8d8"/><path d="M11,0 L17,0 L17,13 L15.3,13 L15.3,1.5 L14,1.5 L14,13 L12.3,13 L12.3,7 L11,7 A3.5,3.5 0 0 1 11,0 Z" fill="#d8d8d8"/></svg>
<svg style="left:1417px;top:443px" width="18" height="16" viewBox="0 0 18 16" ><rect x="0.5" y="7.5" width="5" height="5" fill="none" stroke="#d8d8d8"/><rect x="4" y="10.5" width="5" height="5" fill="#d8d8d8"/><text x="7" y="12" font-family="Liberation Sans" font-size="15" fill="#d8d8d8">A</text></svg>
<svg style="left:1417px;top:483px" width="18" height="18" viewBox="0 0 18 18" ><text x="0" y="16" font-family="Liberation Serif" font-style="italic" font-size="20" fill="#d8d8d8">A</text></svg>
<svg style="left:1418px;top:524px" width="16" height="17" viewBox="0 0 16 17" ><path d="M8,0.8 L15,4.5 L15,12.5 L8,16.2 L1,12.5 L1,4.5 Z M1,4.5 L8,8.3 L15,4.5 M8,8.3 L8,16.2" fill="none" stroke="#d8d8d8" stroke-width="1.3"/><path d="M1,4.5 L8,8.3 L8,16.2 L1,12.5 Z" fill="#d8d8d8" opacity="0.5"/></svg>
<svg style="left:1417px;top:566px" width="16" height="16" viewBox="0 0 16 16" ><path d="M0,2.5 L16,2.5 M0,7.5 L16,7.5 M0,12.5 L16,12.5" stroke="#d8d8d8" stroke-width="1.1"/><circle cx="4.5" cy="2.5" r="2.2" fill="#535353" stroke="#d8d8d8" stroke-width="1.2"/><circle cx="11" cy="7.5" r="2.2" fill="#535353" stroke="#d8d8d8" stroke-width="1.2"/><circle cx="6.5" cy="12.5" r="2.2" fill="#535353" stroke="#d8d8d8" stroke-width="1.2"/></svg>
<svg style="left:1417px;top:605px" width="16" height="17" viewBox="0 0 16 17" ><rect x="0.75" y="0.75" width="11.5" height="12.5" fill="none" stroke="#d8d8d8" stroke-width="1.1"/><rect x="3.25" y="3.25" width="12" height="13" fill="#535353" stroke="#d8d8d8" stroke-width="1.2"/><path d="M9.5,3.5 L13,3.5 L13,9.5 L11.25,8 L9.5,9.5 Z" fill="#d8d8d8"/></svg>
</body></html>
